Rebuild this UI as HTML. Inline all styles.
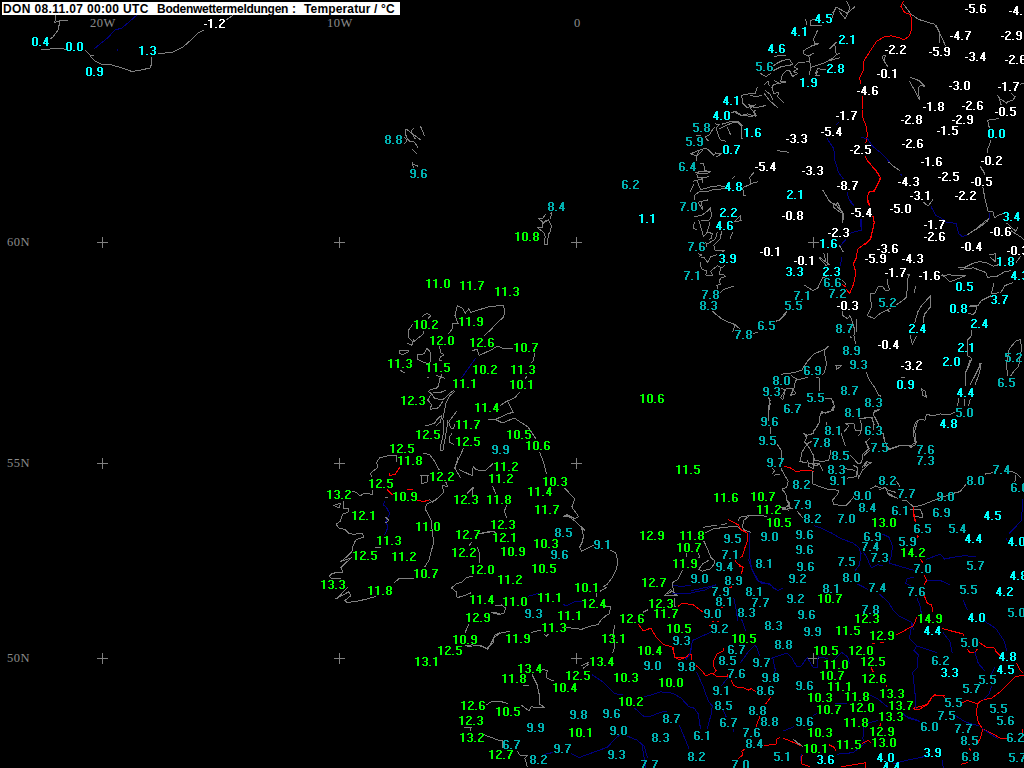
<!DOCTYPE html>
<html><head><meta charset="utf-8"><style>
html,body{margin:0;padding:0;background:#000;width:1024px;height:768px;overflow:hidden}
#m{position:relative;width:1024px;height:768px;background:#000;overflow:hidden}
svg{position:absolute;left:0;top:0}
.g{position:absolute;font:12.5px/12px "Liberation Serif",serif;color:#8c8c8c;letter-spacing:0.5px}
#hd{position:absolute;left:2px;top:2px;width:398px;height:13px;background:#fff;color:#000;font:bold 12px/13px "Liberation Sans",sans-serif;white-space:pre}
#hd span{position:absolute;top:1px;margin-left:-2px}
</style></head><body><div id="m">
<svg width="1024" height="768" fill="none" stroke-width="1" stroke-linejoin="round" stroke-linecap="square" shape-rendering="crispEdges">
<path d="M97 242h11v1h-11zM102 237h1v11h-1z" fill="#808080" stroke="none"/>
<path d="M97 463h11v1h-11zM102 458h1v11h-1z" fill="#808080" stroke="none"/>
<path d="M97 658h11v1h-11zM102 653h1v11h-1z" fill="#808080" stroke="none"/>
<path d="M334 242h11v1h-11zM339 237h1v11h-1z" fill="#808080" stroke="none"/>
<path d="M334 463h11v1h-11zM339 458h1v11h-1z" fill="#808080" stroke="none"/>
<path d="M334 658h11v1h-11zM339 653h1v11h-1z" fill="#808080" stroke="none"/>
<path d="M571 242h11v1h-11zM576 237h1v11h-1z" fill="#808080" stroke="none"/>
<path d="M571 463h11v1h-11zM576 458h1v11h-1z" fill="#808080" stroke="none"/>
<path d="M571 658h11v1h-11zM576 653h1v11h-1z" fill="#808080" stroke="none"/>
<path d="M808 242h11v1h-11zM813 237h1v11h-1z" fill="#808080" stroke="none"/>
<path d="M808 463h11v1h-11zM813 458h1v11h-1z" fill="#808080" stroke="none"/>
<path d="M808 658h11v1h-11zM813 653h1v11h-1z" fill="#808080" stroke="none"/>
<polyline points="55.0,15.0 56.0,19.0 54.0,23.0 61.0,20.0 68.0,21.0" stroke="#808080"/>
<polyline points="60.0,21.0 58.0,30.0 53.0,37.0 50.0,39.0" stroke="#808080"/>
<polyline points="41.0,49.0 49.0,49.0" stroke="#808080"/>
<polyline points="50.0,48.0 62.0,48.0 66.0,50.0" stroke="#808080"/>
<polyline points="85.0,50.0 90.0,55.0 94.0,55.0 90.0,56.0 95.0,61.0 101.0,64.0 112.0,65.0 122.0,68.0 132.0,71.5 141.0,70.0 150.0,68.0 152.0,63.0 151.0,57.0" stroke="#808080"/>
<polyline points="158.0,54.0 173.0,52.0 183.0,47.0 192.0,39.0 198.0,33.0 204.0,30.0" stroke="#808080"/>
<polyline points="226.0,20.0 232.0,16.0 232.0,15.0" stroke="#808080"/>
<polyline points="137.0,15.0 122.0,28.0 115.0,30.0 108.0,37.5 94.0,49.0" stroke="#000080"/>
<polyline points="117.0,49.0 118.0,51.0" stroke="#000080"/>
<polyline points="406.2,129.1 420.6,139.7" stroke="#808080"/>
<polyline points="406.0,129.0 405.0,132.7 407.3,138.9 409.7,141.2 414.4,142.0 417.9,147.5" stroke="#808080"/>
<polyline points="413.6,128.4 411.2,131.1 413.6,136.6 415.2,138.9" stroke="#808080"/>
<polyline points="420.6,126.4 424.5,135.8" stroke="#808080"/>
<polyline points="412.0,149.0 416.7,153.4" stroke="#808080"/>
<polyline points="412.0,162.3 413.6,167.8" stroke="#808080"/>
<polyline points="412.8,163.9 417.9,166.2" stroke="#808080"/>
<polyline points="404.2,137.3 406.6,139.7 405.8,142.8 404.6,143.2" stroke="#808080"/>
<polyline points="545.7,214.2 543.0,218.0 538.3,218.5 542.6,222.0 542.6,223.6 548.4,219.7 551.6,226.0 550.0,232.2 548.4,234.5 547.7,240.0 547.7,244.7 544.1,244.7 544.1,240.4 545.3,236.9 544.5,233.4 542.2,231.4 537.5,227.5 542.6,227.5 543.0,223.6 545.3,220.5" stroke="#808080"/>
<polyline points="550.8,213.4 551.6,213.0 550.6,218.9" stroke="#808080"/>
<polyline points="448.8,333.6 452.7,328.1 452.7,323.4 458.1,323.4 455.0,315.6 457.3,305.5 462.8,308.6 465.2,313.3 469.0,308.6 470.6,312.5 475.3,311.0 487.8,307.0 500.3,305.5 503.4,305.5 505.0,311.7 503.4,317.2 496.4,323.4 490.9,329.7 484.7,335.2" stroke="#808080"/>
<polyline points="472.2,350.8 476.9,349.2 479.2,355.5 492.5,349.2 497.2,346.1 503.4,348.4 512.8,348.4" stroke="#808080"/>
<polyline points="534.7,353.9 533.1,360.9 531.6,362.5" stroke="#808080"/>
<polyline points="526.9,376.6 525.3,378.1" stroke="#808080"/>
<polyline points="519.1,392.7 515.2,397.6 506.4,401.5 500.5,405.4" stroke="#808080"/>
<polyline points="508.4,402.5 513.2,412.2 506.4,414.2 496.6,419.0 488.8,419.0" stroke="#808080"/>
<polyline points="496.6,420.0 502.5,423.0 514.2,418.0 527.9,426.9 535.7,438.6" stroke="#808080"/>
<polyline points="539.6,452.3 543.5,462.0 546.4,473.8" stroke="#808080"/>
<polyline points="565.0,488.4 574.8,499.1 571.8,507.0 578.7,516.7 574.8,518.7 567.0,514.8 563.0,516.7 568.0,516.0 575.0,521.0 584.5,530.0" stroke="#808080"/>
<polyline points="422.2,316.4 426.9,313.3 430.8,315.6 428.4,318.0" stroke="#808080"/>
<polyline points="412.8,324.2 408.9,329.7 408.1,336.7 412.8,342.2 419.0,337.5 423.0,334.4 423.8,331.2" stroke="#808080"/>
<polyline points="407.3,343.0 412.0,345.3 413.6,339.8" stroke="#808080"/>
<polyline points="399.5,350.0 407.3,350.0 408.9,351.6 402.7,354.7 399.5,353.1 399.5,350.0" stroke="#808080"/>
<polyline points="417.5,354.7 423.8,353.9 426.9,348.4 430.0,351.6 430.8,360.2 429.2,364.0 423.8,362.5 417.5,359.4 417.5,354.7" stroke="#808080"/>
<polyline points="439.4,346.9 440.9,353.1 444.0,354.7 440.2,357.0 439.4,360.2 441.7,360.9" stroke="#808080"/>
<polyline points="400.3,370.3 404.2,372.6" stroke="#808080"/>
<polyline points="436.2,375.0 440.2,377.3 444.8,378.1" stroke="#808080"/>
<polyline points="426.9,378.1 428.4,377.3" stroke="#808080"/>
<polyline points="441.7,375.0 439.4,379.7 438.6,385.9 436.2,388.3 430.0,389.8 428.4,391.4 431.6,393.8 427.7,400.0 431.6,404.7 430.0,409.4 438.6,407.8 442.5,401.6" stroke="#808080"/>
<polyline points="433.1,392.2 440.9,392.2 445.6,390.6" stroke="#808080"/>
<polyline points="431.6,393.8 434.7,398.4 442.5,400.0 450.3,393.0 453.4,390.6" stroke="#808080"/>
<polyline points="475.3,358.6 462.0,377.3" stroke="#000080"/>
<polyline points="454.6,391.7 449.8,395.6 445.9,403.4 442.9,419.0 443.9,430.8 441.0,444.5 440.0,450.3 443.0,450.0 446.1,432.8 448.0,420.0" stroke="#808080"/>
<polyline points="456.6,411.2 448.8,422.0 450.7,427.9 453.7,428.8 454.6,424.9" stroke="#808080"/>
<polyline points="451.7,433.7 449.8,436.6 449.8,442.5 453.7,444.5" stroke="#808080"/>
<polyline points="425.8,425.8 434.4,423.4 437.5,418.8 441.4,415.6 440.6,421.9 436.0,425.8" stroke="#808080"/>
<polyline points="463.4,448.4 454.6,467.9 460.5,477.7" stroke="#808080"/>
<polyline points="459.5,469.8 472.2,475.7 473.2,465.9 476.1,469.8 484.9,470.8 492.7,464.0" stroke="#808080"/>
<polyline points="492.7,486.4 495.7,493.3" stroke="#808080"/>
<polyline points="506.4,506.0 504.5,510.9 506.4,517.7" stroke="#808080"/>
<polyline points="467.3,493.3 473.2,487.4 472.2,495.2" stroke="#808080"/>
<polyline points="454.7,468.8 457.8,457.8" stroke="#808080"/>
<polyline points="371.9,476.6 370.3,473.4 378.1,467.2 376.6,462.5 379.7,457.8 389.0,455.5 396.1,455.5 396.9,461.7" stroke="#808080"/>
<polyline points="400.0,467.2 395.3,474.2 389.0,475.8 389.8,473.4" stroke="#ff0000"/>
<polyline points="387.5,489.8 392.2,494.5" stroke="#ff0000"/>
<polyline points="407.0,489.4 412.5,489.4" stroke="#ff0000"/>
<polyline points="417.2,500.0 423.4,501.6 428.9,500.0" stroke="#ff0000"/>
<polyline points="429.7,500.0 432.8,502.3 439.0,496.9 443.8,492.2 442.2,485.2 447.7,486.7 446.1,482.8" stroke="#808080"/>
<polyline points="423.4,453.1 429.7,454.7 434.4,460.9 439.0,469.5" stroke="#808080"/>
<polyline points="421.0,475.8 428.1,475.0 427.3,482.0 421.9,483.6 421.0,475.8" stroke="#808080"/>
<polyline points="352.3,491.4 356.2,492.2 360.2,496.1 364.0,493.0 372.7,494.5 372.7,490.3" stroke="#808080"/>
<polyline points="333.6,505.5 340.6,503.1 339.0,507.8 333.6,505.5" stroke="#808080"/>
<polyline points="385.0,497.7 387.0,497.7" stroke="#808080"/>
<polyline points="343.0,501.0 344.0,508.8 348.8,508.8 347.9,512.7 343.0,513.7 340.0,521.5 336.1,524.4 339.0,528.3 344.9,529.3 348.8,533.2 352.7,534.2 362.5,533.6 363.5,537.1 355.7,540.0 352.7,546.9 351.8,551.8 346.9,556.6 341.0,561.5 351.8,557.6 345.9,562.5 341.0,567.4 343.0,572.3 332.2,573.2 329.3,576.2 331.2,578.1 340.0,578.1" stroke="#808080"/>
<polyline points="347.9,586.9 337.1,598.6" stroke="#808080"/>
<polyline points="336.1,598.6 348.8,591.8 350.8,595.7 344.9,600.6 346.9,602.5 354.7,601.6 364.5,599.6 375.2,596.7" stroke="#808080"/>
<polyline points="393.8,583.0 399.6,578.1 413.3,578.1" stroke="#808080"/>
<polyline points="434.8,500.0 427.0,503.9 425.0,508.8 428.9,515.6 430.9,519.5 432.8,535.2 433.8,542.0 430.9,552.7 428.9,560.5 425.0,566.4" stroke="#808080"/>
<polyline points="375.2,547.3 380.1,547.3" stroke="#808080"/>
<polyline points="385.0,501.0 383.0,505.0 386.0,506.8 389.8,513.7 386.0,521.5 387.9,527.3 385.0,534.2" stroke="#000080"/>
<polyline points="386.0,517.6 388.9,520.5 386.0,522.5" stroke="#808080"/>
<polyline points="481.6,533.2 491.4,531.2 495.3,532.2" stroke="#808080"/>
<polyline points="471.9,542.0 469.0,545.9" stroke="#808080"/>
<polyline points="477.7,547.9 479.7,554.7 479.7,562.5" stroke="#808080"/>
<polyline points="471.9,576.2 466.0,578.1 462.1,582.0 456.2,584.0 451.4,587.9 456.2,591.8 457.2,597.7 464.0,595.7 470.9,592.8" stroke="#808080"/>
<polyline points="495.0,606.0 501.5,605.0 505.4,607.9 504.4,612.8 499.5,614.7 491.7,612.8" stroke="#808080"/>
<polyline points="491.4,612.3 500.0,613.3" stroke="#808080"/>
<polyline points="468.9,624.0 465.0,632.8" stroke="#808080"/>
<polyline points="466.0,645.5 471.9,644.9 479.7,645.5 487.5,649.4 492.4,640.6 495.3,634.8 500.0,632.8" stroke="#808080"/>
<polyline points="509.3,631.3 499.5,633.3 494.6,637.2 490.7,645.0 487.8,648.9 480.0,645.0" stroke="#808080"/>
<polyline points="540.5,630.3 531.8,632.3" stroke="#808080"/>
<polyline points="544.5,634.3 546.4,636.2 548.4,634.3" stroke="#808080"/>
<polyline points="573.8,520.0 581.6,527.8 583.5,535.6 582.5,541.5 579.6,547.3 581.6,551.2 585.5,549.3 593.3,545.4" stroke="#808080"/>
<polyline points="610.9,550.3 615.8,553.2 617.7,561.0 616.7,568.8 612.8,576.6 607.0,584.5 603.0,586.4 607.0,587.4 600.1,591.3" stroke="#808080"/>
<polyline points="596.2,593.2 596.2,596.2" stroke="#808080"/>
<polyline points="605.0,606.0 610.9,607.0 609.0,613.8 606.0,615.7 601.1,619.6 598.2,624.5 589.4,626.4 581.6,629.4 566.9,627.4" stroke="#808080"/>
<polyline points="480.0,533.7 491.7,531.7" stroke="#808080"/>
<polyline points="528.8,596.2 538.6,593.2" stroke="#000080"/>
<polyline points="563.0,604.0 565.9,606.0 573.8,602.0 581.6,601.0" stroke="#000080"/>
<polyline points="614.8,625.5 612.8,635.2 614.8,647.0 612.8,652.8" stroke="#808080"/>
<polyline points="581.6,665.5 588.4,662.6" stroke="#808080"/>
<polyline points="644.0,611.8 648.0,609.8" stroke="#808080"/>
<polyline points="738.4,520.3 740.0,517.2 749.4,515.6 761.9,515.6 766.6,516.4" stroke="#808080"/>
<polyline points="749.4,515.6 743.9,520.3 742.3,526.6 744.7,530.5 750.2,532.0" stroke="#808080"/>
<polyline points="703.3,527.3 711.9,525.8 716.6,525.0" stroke="#808080"/>
<polyline points="721.2,525.0 726.7,523.4" stroke="#808080"/>
<polyline points="705.6,532.8 713.4,528.9 724.4,527.3 736.9,526.2 746.2,532.8" stroke="#808080"/>
<polyline points="704.0,541.4 707.2,548.4 711.1,557.8 714.2,560.2 714.2,564.0 710.3,568.8 702.5,571.1 698.6,569.5 702.5,564.0 708.8,560.2" stroke="#808080"/>
<polyline points="686.0,553.9 686.0,556.2" stroke="#808080"/>
<polyline points="698.6,553.9 700.2,557.0 698.6,557.8" stroke="#808080"/>
<polyline points="682.2,570.3 677.5,579.7 672.0,582.8 672.8,586.7 673.6,590.6" stroke="#808080"/>
<polyline points="664.4,595.4 670.4,589.4 678.1,595.9 664.4,595.4" stroke="#808080"/>
<polyline points="667.8,593.7 672.0,591.1 675.5,594.9" stroke="#808080"/>
<polyline points="674.4,598.0 674.4,606.2 676.0,607.0" stroke="#808080"/>
<polyline points="647.8,610.2 643.1,612.5" stroke="#808080"/>
<polyline points="728.3,519.5 738.4,525.0 740.8,529.7 747.0,532.8 747.8,539.8 744.7,548.4 742.3,556.2 740.0,557.8" stroke="#ff0000"/>
<polyline points="735.3,561.0 737.7,564.0 743.1,567.2 741.6,573.4" stroke="#ff0000"/>
<polyline points="730.0,587.5 731.5,587.0" stroke="#ff0000"/>
<polyline points="722.0,607.5 723.0,607.0" stroke="#ff0000"/>
<polyline points="678.3,606.2 682.2,603.1 693.1,604.7 702.5,611.7" stroke="#ff0000"/>
<polyline points="749.4,532.8 749.4,546.9 750.2,562.5 752.5,570.3 758.8,581.2 769.7,584.4 777.5,590.6 782.2,588.3" stroke="#000080"/>
<polyline points="673.6,585.2 681.4,586.7 690.0,585.2" stroke="#000080"/>
<polyline points="672.8,593.8 686.9,593.8 705.6,589.8 710.3,587.5 715.8,584.4" stroke="#000080"/>
<polyline points="691.6,590.6 705.6,587.5 715.0,585.2" stroke="#000080"/>
<polyline points="733.8,598.4 736.1,609.4 737.7,620.0" stroke="#000080"/>
<polyline points="786.9,500.0 790.0,503.9 786.9,506.2 792.3,508.6 782.2,509.4" stroke="#808080"/>
<polyline points="836.2,7.0 833.9,11.7 832.3,17.2" stroke="#808080"/>
<polyline points="836.2,7.0 840.0,9.5" stroke="#808080"/>
<polyline points="805.8,19.5 806.6,24.2" stroke="#808080"/>
<polyline points="815.2,19.5 810.5,20.3 810.5,25.8 821.4,25.8" stroke="#808080"/>
<polyline points="817.5,30.5 813.6,39.0 814.4,43.0 818.3,43.8 811.2,46.1 803.4,50.8 804.2,54.7 808.9,55.5 813.6,53.1 808.9,56.2 810.5,65.6 809.7,75.0" stroke="#808080"/>
<polyline points="811.2,67.2 825.3,62.5 833.1,57.8 836.2,54.7 840.0,53.1" stroke="#808080"/>
<polyline points="836.2,42.2 831.6,46.9 830.0,48.4" stroke="#808080"/>
<polyline points="834.7,43.8 836.2,54.7" stroke="#808080"/>
<polyline points="830.8,60.2 840.0,57.8" stroke="#808080"/>
<polyline points="826.0,69.5 817.5,68.8 815.2,73.4 817.5,71.9 815.9,75.8 819.8,75.0" stroke="#808080"/>
<polyline points="809.7,61.7 798.8,62.5 794.0,67.2 798.0,68.8 793.3,71.9 798.0,73.4 792.5,76.6 789.4,70.3 785.5,71.1 782.3,75.0 780.8,81.2 785.5,82.0 773.8,84.4 771.4,87.5" stroke="#808080"/>
<polyline points="774.5,56.2 785.5,55.5" stroke="#808080"/>
<polyline points="773.8,65.6 776.9,63.3 783.1,60.2 789.4,59.4 792.5,64.0 789.4,65.6 781.6,66.4 773.8,70.3" stroke="#808080"/>
<polyline points="760.5,73.4 765.9,76.6 770.6,73.4" stroke="#808080"/>
<polyline points="764.4,84.4 768.3,81.2 769.0,85.2" stroke="#808080"/>
<polyline points="774.5,80.5 778.4,82.8 773.8,85.2" stroke="#808080"/>
<polyline points="757.3,87.5 755.0,93.8 748.8,93.8 741.7,95.3 742.5,103.1 747.2,107.8 755.8,104.7 750.3,107.8 756.6,115.6 750.3,116.4 739.4,114.8 733.1,110.9" stroke="#808080"/>
<polyline points="765.2,90.6 769.8,93.8 773.0,100.0" stroke="#808080"/>
<polyline points="764.4,93.8 769.0,100.0 777.7,107.8" stroke="#808080"/>
<polyline points="772.2,87.5 773.8,93.8 778.4,92.2 777.7,96.9 783.1,102.3" stroke="#808080"/>
<polyline points="750.3,95.3 756.6,96.9 761.2,95.3" stroke="#808080"/>
<polyline points="748.8,104.7 755.0,107.8 765.9,105.5" stroke="#808080"/>
<polyline points="731.9,112.3 736.6,111.6 741.2,115.5 747.5,113.9 755.3,116.2 753.8,112.3 755.3,110.0" stroke="#808080"/>
<polyline points="715.5,124.0 719.4,124.8 716.2,128.0 717.8,133.4 720.2,139.7 725.6,141.2" stroke="#808080"/>
<polyline points="719.4,128.8 725.6,125.6 733.4,122.5 738.1,122.5 742.0,127.2 741.2,138.1 742.8,138.9" stroke="#808080"/>
<polyline points="722.5,124.0 732.7,121.0 738.1,121.7 742.0,125.6" stroke="#808080"/>
<polyline points="727.2,127.2 730.3,134.2" stroke="#808080"/>
<polyline points="714.7,127.2 711.6,131.1 709.2,135.0 705.3,136.6 706.9,139.7 708.4,140.5" stroke="#808080"/>
<polyline points="696.0,135.0 700.6,135.0" stroke="#808080"/>
<polyline points="705.3,148.3 708.4,149.8 713.9,155.3 715.5,153.0 721.7,153.8 716.2,156.9" stroke="#808080"/>
<polyline points="704.5,148.3 698.3,150.6 690.5,153.8 696.7,156.1 702.2,150.6" stroke="#808080"/>
<polyline points="699.0,150.6 696.0,156.9 696.7,160.0" stroke="#808080"/>
<polyline points="700.6,163.1 703.8,163.9 704.5,170.2 708.4,171.7" stroke="#808080"/>
<polyline points="696.0,172.5 703.8,171.0 710.8,171.7 706.9,173.3 696.7,174.0 697.5,177.2 703.8,178.0 708.4,176.4" stroke="#808080"/>
<polyline points="693.6,181.1 697.5,180.3 702.2,178.8 702.2,182.7" stroke="#808080"/>
<polyline points="693.6,185.0 690.5,191.2" stroke="#808080"/>
<polyline points="697.5,181.9 700.6,189.7 706.9,188.1 711.6,186.6 719.4,185.8 724.1,186.6" stroke="#808080"/>
<polyline points="695.2,194.4 700.6,191.2 705.3,192.0 713.1,189.7 722.5,188.9 724.8,188.9" stroke="#808080"/>
<polyline points="694.4,195.2 694.4,199.0" stroke="#808080"/>
<polyline points="732.7,178.8 734.2,176.4" stroke="#808080"/>
<polyline points="743.6,187.3 753.8,182.7 757.6,181.9" stroke="#808080"/>
<polyline points="753.8,172.5 749.8,177.2 750.6,183.4 749.0,185.0" stroke="#808080"/>
<polyline points="742.8,188.1 743.6,195.9 745.2,195.2" stroke="#808080"/>
<polyline points="777.2,150.6 788.1,152.2" stroke="#808080"/>
<polyline points="698.1,202.3 707.5,200.0" stroke="#808080"/>
<polyline points="698.1,203.1 702.8,209.4 701.2,203.1" stroke="#808080"/>
<polyline points="694.2,216.4 701.2,215.6 706.7,211.7 710.6,207.8 711.4,216.4 709.0,220.3 701.2,220.3" stroke="#808080"/>
<polyline points="694.2,222.7 693.4,228.1 696.6,229.7" stroke="#808080"/>
<polyline points="698.9,220.3 703.6,236.7 707.5,232.0 712.2,233.6 711.4,238.3 709.0,239.8" stroke="#808080"/>
<polyline points="709.8,222.7 707.5,231.2" stroke="#808080"/>
<polyline points="717.2,232.8 715.3,239.0 707.5,243.8" stroke="#808080"/>
<polyline points="721.6,232.0 720.0,239.0 713.8,245.3 715.3,250.8 724.7,250.0 723.1,251.6" stroke="#808080"/>
<polyline points="705.9,242.2 706.7,246.9" stroke="#808080"/>
<polyline points="732.5,232.8 730.2,238.3" stroke="#808080"/>
<polyline points="734.0,221.9 740.3,215.6 741.1,220.3 735.6,221.9" stroke="#808080"/>
<polyline points="698.9,253.9 702.0,254.7 699.7,256.2" stroke="#808080"/>
<polyline points="701.2,257.8 704.4,257.8 707.5,262.5 710.6,257.0 716.9,254.7" stroke="#808080"/>
<polyline points="700.5,262.5 701.2,268.8 706.7,271.1 705.9,275.0 713.0,275.8 710.6,271.1 714.5,268.0 717.7,265.6 721.6,268.0 724.7,265.6" stroke="#808080"/>
<polyline points="720.8,267.2 719.2,275.0 723.1,274.2 725.5,276.6 720.8,278.1 719.2,281.2 720.8,284.4 716.9,285.2 717.7,288.3" stroke="#808080"/>
<polyline points="720.0,293.0 723.1,289.8 734.0,285.9" stroke="#808080"/>
<polyline points="713.0,311.7 723.1,320.0" stroke="#808080"/>
<polyline points="804.4,285.2 813.0,290.6 817.7,288.3 822.3,278.1 826.2,276.6" stroke="#808080"/>
<polyline points="786.4,311.7 779.4,320.0" stroke="#808080"/>
<polyline points="819.2,257.8 826.2,265.6" stroke="#808080"/>
<polyline points="823.9,253.9 826.2,262.5" stroke="#808080"/>
<polyline points="827.8,253.0 827.8,264.0" stroke="#808080"/>
<polyline points="713.3,312.5 721.9,318.8 729.7,322.7 733.6,323.4 734.4,327.3 732.8,331.2" stroke="#808080"/>
<polyline points="733.6,323.4 739.8,328.9" stroke="#808080"/>
<polyline points="753.1,333.6 757.8,332.0" stroke="#808080"/>
<polyline points="776.6,321.0 781.2,318.8 786.7,312.5" stroke="#808080"/>
<polyline points="842.2,311.7 843.0,315.6 847.7,318.8 850.0,315.6 852.3,321.9 854.7,329.7 853.9,335.9 855.5,343.8" stroke="#808080"/>
<polyline points="856.0,319.5 856.0,331.0" stroke="#808080"/>
<polyline points="850.0,336.7 851.5,337.5" stroke="#808080"/>
<polyline points="836.0,365.6 841.4,365.6 836.7,369.5 836.0,365.6" stroke="#808080"/>
<polyline points="828.9,346.1 823.4,350.0 814.0,353.9 807.8,360.9 804.7,365.6 801.6,370.3 793.8,372.7 781.2,374.2" stroke="#808080"/>
<polyline points="828.9,346.1 825.0,350.0 824.2,351.6 826.6,364.0 824.2,372.7 821.9,375.0" stroke="#808080"/>
<polyline points="791.4,375.8 797.7,379.7 807.8,377.3" stroke="#808080"/>
<polyline points="797.7,379.7 795.3,381.2 793.8,389.0 790.6,395.3 796.1,393.8 792.2,388.3" stroke="#808080"/>
<polyline points="816.4,377.3 819.5,378.1 819.5,390.6" stroke="#808080"/>
<polyline points="781.2,388.3 785.2,389.8 782.8,400.0 780.5,397.7 786.0,389.0 792.2,388.3" stroke="#808080"/>
<polyline points="768.8,397.7 770.3,403.9 768.0,414.0 768.8,420.0" stroke="#808080"/>
<polyline points="825.0,398.4 831.2,398.4 834.4,405.5 833.6,410.2 825.0,412.5 820.3,414.0 819.5,420.0" stroke="#808080"/>
<polyline points="770.2,400.0 768.6,406.2 768.6,414.0" stroke="#808080"/>
<polyline points="770.2,427.3 770.2,433.6" stroke="#808080"/>
<polyline points="777.2,444.5 781.1,450.0 781.9,459.4" stroke="#808080"/>
<polyline points="781.1,468.8 788.1,481.2 786.6,487.5 781.9,489.0 785.8,493.8 786.6,500.0 789.7,506.2 781.9,507.8 788.9,510.2" stroke="#808080"/>
<polyline points="772.5,468.8 774.8,470.3 772.5,473.4" stroke="#808080"/>
<polyline points="774.8,475.0 779.5,474.2" stroke="#808080"/>
<polyline points="797.5,511.7 802.2,517.2" stroke="#808080"/>
<polyline points="832.7,400.0 834.2,405.5 831.1,411.0 825.6,413.3 821.7,411.7 820.2,414.0 819.4,421.9 816.2,428.1 813.9,430.5 813.1,433.6 806.9,435.2 803.0,432.8 806.9,437.5 804.5,442.2 806.9,444.5 802.2,451.6 799.8,461.7 806.9,462.5" stroke="#808080"/>
<polyline points="806.9,443.8 811.6,441.4" stroke="#808080"/>
<polyline points="806.9,443.8 813.1,454.7 814.7,460.2 822.5,461.7 828.8,460.2 831.1,450.0" stroke="#808080"/>
<polyline points="826.4,422.7 826.4,424.0" stroke="#808080"/>
<polyline points="807.8,460.2 808.4,466.4 813.9,468.8 813.9,459.4" stroke="#808080"/>
<polyline points="810.0,463.3 816.2,465.6 819.4,464.0 822.5,470.3" stroke="#808080"/>
<polyline points="785.0,466.4 790.5,468.0 796.7,471.9 802.2,470.3 813.1,471.1" stroke="#ff0000"/>
<polyline points="812.3,471.9 812.3,483.6 816.2,485.2 828.8,489.8 835.0,489.8 838.9,490.6 837.3,494.5 832.7,500.0 833.4,504.7 845.9,505.5 849.8,501.6 853.8,496.9" stroke="#808080"/>
<polyline points="841.2,433.6 845.2,445.3" stroke="#808080"/>
<polyline points="844.4,431.2 849.1,425.8 845.2,423.4 853.8,423.4 855.3,430.5 860.0,430.5 860.8,433.6 858.4,435.2" stroke="#808080"/>
<polyline points="860.0,418.8 872.5,417.2 874.0,429.7" stroke="#808080"/>
<polyline points="874.0,412.5 879.5,409.4" stroke="#808080"/>
<polyline points="873.3,414.8 878.8,425.0" stroke="#808080"/>
<polyline points="860.8,420.3 861.6,430.5" stroke="#808080"/>
<polyline points="883.4,433.6 885.0,442.2 889.0,449.2 900.6,445.3 910.0,446.1 916.2,442.2 914.7,431.2 917.8,420.3" stroke="#808080"/>
<polyline points="869.4,438.3 866.2,442.2 869.4,448.4 863.1,453.9 861.6,462.5 858.4,464.0 850.6,455.5" stroke="#808080"/>
<polyline points="853.8,465.6 856.9,467.2 858.4,478.1 862.3,470.3 871.0,462.5 866.2,461.7 862.3,467.2" stroke="#808080"/>
<polyline points="845.9,468.8 854.5,470.3" stroke="#808080"/>
<polyline points="847.5,478.1 856.1,476.6 857.7,467.2" stroke="#808080"/>
<polyline points="870.2,489.0 875.6,486.0 881.9,488.3 885.0,487.5 888.1,493.0 897.5,498.4" stroke="#808080"/>
<polyline points="896.7,481.2 899.8,486.7" stroke="#808080"/>
<polyline points="867.1,160.0 873.4,167.8 880.4,177.2 878.1,183.4 874.2,191.2 869.5,192.0 867.1,196.7 869.5,205.3" stroke="#ff0000"/>
<polyline points="873.4,217.0 874.2,222.5 871.8,233.4 870.2,239.7 864.0,245.2" stroke="#ff0000"/>
<polyline points="889.0,162.3 893.0,166.0 899.2,170.2" stroke="#808080"/>
<polyline points="887.4,160.0 889.0,161.6" stroke="#000080"/>
<polyline points="900.7,174.0 901.5,175.6" stroke="#000080"/>
<polyline points="923.4,202.2 928.1,206.1 932.8,199.8" stroke="#808080"/>
<polyline points="931.2,206.9 935.9,215.5 940.6,217.8 946.8,222.5 956.2,223.3 958.5,233.4 962.4,236.6 967.1,235.0" stroke="#000080"/>
<polyline points="967.1,235.0 976.5,228.8 984.3,221.7 989.0,218.6 987.4,221.0 979.6,227.2 975.0,230.0" stroke="#808080"/>
<polyline points="989.0,213.1 989.8,218.6" stroke="#000080"/>
<polyline points="980.4,166.2 984.3,172.5 984.3,174.8" stroke="#808080"/>
<polyline points="982.8,187.3 985.1,199.0 988.2,211.6 992.9,211.6 994.5,217.8 999.2,214.7 1002.3,213.9" stroke="#808080"/>
<polyline points="1007.0,223.3 1015.6,231.1 1018.0,227.2" stroke="#808080"/>
<polyline points="1011.7,231.1 1020.2,236.6 1024.0,239.7" stroke="#808080"/>
<polyline points="1020.2,256.9 1016.3,262.3" stroke="#808080"/>
<polyline points="958.5,267.8 964.0,267.8 973.4,263.1 979.6,261.6 987.4,263.1 993.8,266.2 998.4,264.7" stroke="#808080"/>
<polyline points="960.9,269.4 973.4,267.8 985.9,272.5 987.4,277.2 996.8,276.4 1004.6,271.7 1010.1,270.9" stroke="#808080"/>
<polyline points="989.8,254.5 995.2,253.8 995.2,261.6 990.6,257.6" stroke="#808080"/>
<polyline points="941.3,275.6 948.4,274.8 957.8,275.6 965.6,275.6" stroke="#808080"/>
<polyline points="907.8,274.8 909.3,274.8 907.8,278.8 907.0,291.2 906.2,297.5 901.5,301.4 896.8,304.5" stroke="#808080"/>
<polyline points="887.4,279.5 887.4,283.4 889.8,289.7 885.9,291.2 882.8,286.6 878.1,286.6 874.9,293.6 871.0,293.6 870.2,297.5 871.8,306.9 867.1,315.5 874.2,318.6 879.6,313.9 886.7,310.0 890.6,308.4" stroke="#808080"/>
<polyline points="887.4,310.0 889.0,311.6" stroke="#808080"/>
<polyline points="915.6,286.6 914.0,292.8" stroke="#808080"/>
<polyline points="930.4,296.0 921.8,305.3 917.9,311.6 914.8,322.5" stroke="#808080"/>
<polyline points="930.4,296.0 930.4,306.9 924.2,314.7 923.4,322.5" stroke="#808080"/>
<polyline points="910.1,335.8 912.4,344.4 916.3,336.6" stroke="#808080"/>
<polyline points="942.1,274.8 945.2,277.2 950.0,281.9 957.8,278.8 965.6,275.6" stroke="#808080"/>
<polyline points="1012.4,282.7 1004.6,285.8 1000.7,292.8" stroke="#808080"/>
<polyline points="993.8,283.4 991.4,293.6 998.4,292.8" stroke="#808080"/>
<polyline points="990.6,295.9 981.2,300.6 978.1,305.3 968.8,306.1 976.5,306.9 975.7,311.6 972.6,314.7 968.8,313.1" stroke="#808080"/>
<polyline points="971.8,330.3 971.0,336.6 967.9,339.7 967.1,355.3 971.8,358.4 968.8,366.2 965.6,372.5 965.6,385.0" stroke="#808080"/>
<polyline points="970.2,360.0 965.6,372.5" stroke="#808080"/>
<polyline points="981.2,363.1 970.2,385.0" stroke="#808080"/>
<polyline points="979.6,363.9 981.2,363.1 979.6,372.5 975.0,385.0" stroke="#808080"/>
<polyline points="1020.2,339.7 1015.6,341.2 1009.3,349.0 1006.2,364.7 1007.8,375.6" stroke="#808080"/>
<polyline points="1020.2,339.7 1021.8,347.5 1018.7,366.2 1014.0,371.0 1010.9,375.6" stroke="#808080"/>
<polyline points="901.5,377.2 904.6,377.2" stroke="#808080"/>
<polyline points="866.3,372.5 868.7,378.8 875.0,388.1 878.8,395.2 880.4,396.0" stroke="#808080"/>
<polyline points="879.6,409.2 874.9,410.8 873.4,414.7 876.5,420.2 878.8,424.0" stroke="#808080"/>
<polyline points="864.0,417.8 871.8,417.8 873.4,422.5 874.2,424.8" stroke="#808080"/>
<polyline points="882.8,433.4 884.3,439.7" stroke="#808080"/>
<polyline points="870.2,438.1 865.6,442.0 867.9,447.5 869.5,450.6 864.0,455.3" stroke="#808080"/>
<polyline points="864.0,466.2 871.0,463.1 867.1,461.6 865.6,464.7" stroke="#808080"/>
<polyline points="889.0,449.8 901.5,445.2 909.3,445.6 910.9,447.5 915.6,444.4 914.0,436.6 913.2,428.8 915.6,422.5 920.2,419.4 924.9,420.2 926.5,414.7 934.3,415.5 940.6,413.9 945.2,414.7 951.5,413.9 954.6,412.3" stroke="#808080"/>
<polyline points="957.8,405.3 958.5,399.0" stroke="#808080"/>
<polyline points="964.0,405.3 964.0,399.0" stroke="#808080"/>
<polyline points="968.8,405.3 970.2,399.0" stroke="#808080"/>
<polyline points="921.8,388.9 925.0,391.2 926.5,397.5 922.6,395.2 921.8,388.9" stroke="#808080"/>
<polyline points="880.0,489.5 885.6,487.4 888.4,490.2 887.0,492.3 890.5,495.9 896.9,498.0" stroke="#808080"/>
<polyline points="888.4,490.2 895.5,492.3" stroke="#808080"/>
<polyline points="902.5,500.8 906.0,500.0 908.1,502.2 913.8,507.1" stroke="#808080"/>
<polyline points="913.8,507.1 922.2,505.0 936.2,499.4 954.5,493.0 960.2,491.6 965.8,484.6" stroke="#808080"/>
<polyline points="985.5,474.0 992.5,472.7" stroke="#808080"/>
<polyline points="1010.8,471.2 1016.4,473.4 1020.6,477.6" stroke="#808080"/>
<polyline points="1015.7,475.5 1015.0,481.1" stroke="#808080"/>
<polyline points="910.2,509.2 920.8,510.0 922.2,514.1 922.9,517.7 913.8,516.2" stroke="#808080"/>
<polyline points="913.0,507.1 913.8,516.2 915.9,521.9" stroke="#ff0000"/>
<polyline points="917.3,535.2 918.0,536.6" stroke="#ff0000"/>
<polyline points="920.8,559.9 922.2,562.7" stroke="#ff0000"/>
<polyline points="1022.0,499.4 1022.8,502.2 1021.3,520.5 1015.0,527.5 1009.4,533.1" stroke="#000080"/>
<polyline points="1006.6,538.8 1007.3,540.9" stroke="#000080"/>
<polyline points="926.4,559.2 940.5,554.2 944.7,559.2 950.3,557.8 964.4,555.6 975.6,557.0" stroke="#000080"/>
<polyline points="903.1,1.6 900.8,6.2 904.7,12.5 910.9,14.8 911.7,28.9 909.4,35.9 903.9,39.8 898.4,37.5 891.4,35.9 884.4,36.7 876.6,41.4 868.8,53.1 864.0,60.9 863.3,70.3 859.4,78.1 860.9,83.6" stroke="#ff0000"/>
<polyline points="862.5,96.9 862.0,110.0 862.8,117.8 865.9,125.6 867.5,135.0 865.9,142.8" stroke="#ff0000"/>
<polyline points="865.2,156.9 869.1,163.1 875.3,169.4 880.8,178.0 877.7,185.0 874.5,190.5 869.1,192.0 867.5,196.0 867.5,202.2 869.1,205.3" stroke="#ff0000"/>
<polyline points="903.9,4.7 910.9,14.0 918.8,19.5 934.4,24.2 939.0,31.2 939.8,42.2" stroke="#808080"/>
<polyline points="935.9,25.0 945.3,45.3" stroke="#808080"/>
<polyline points="882.0,56.2 885.2,55.5 884.4,61.0 887.5,66.4 883.6,60.2 882.0,56.2" stroke="#808080"/>
<polyline points="910.2,77.3 918.8,80.5 925.0,86.7 920.3,85.2 918.0,89.0 919.5,100.0 916.4,93.8 910.9,83.6 909.4,81.2" stroke="#808080"/>
<polyline points="846.9,1.6 850.0,7.8 845.3,18.8 839.0,10.9" stroke="#808080"/>
<polyline points="832.8,12.5 836.7,7.0 846.9,13.3 854.7,7.0" stroke="#808080"/>
<polyline points="838.6,122.5 836.2,124.8" stroke="#000080"/>
<polyline points="826.9,138.1 833.9,149.0 834.7,160.0 838.6,172.5 843.3,178.8" stroke="#000080"/>
<polyline points="847.2,192.8 849.5,200.6 853.4,205.3" stroke="#000080"/>
<polyline points="861.2,219.4 861.2,230.0" stroke="#000080"/>
<polyline points="862.0,137.3 867.5,138.9 872.2,145.9 880.0,152.2 887.8,160.0" stroke="#000080"/>
<polyline points="823.0,190.5 830.0,202.2 834.7,203.8 844.1,213.9 842.5,222.5" stroke="#808080"/>
<polyline points="834.7,203.8 833.0,206.9 841.0,213.0" stroke="#808080"/>
<polyline points="997.1,95.2 1000.2,99.0 1006.5,103.0 1008.0,101.4 1012.8,100.6 1015.1,96.7 1011.2,93.6" stroke="#808080"/>
<polyline points="999.5,99.0 1001.0,104.5" stroke="#808080"/>
<polyline points="1020.6,84.2 1023.0,83.4" stroke="#808080"/>
<polyline points="998.7,118.6 987.8,120.2 988.5,125.6 989.3,127.2" stroke="#808080"/>
<polyline points="990.9,140.5 987.8,149.0 987.8,152.2" stroke="#808080"/>
<polyline points="980.0,166.2 984.6,174.0" stroke="#808080"/>
<polyline points="748.6,560.0 752.5,571.0 757.2,580.3 761.9,583.4 769.7,583.4 773.6,588.1 777.5,590.5 783.0,588.1" stroke="#000080"/>
<polyline points="741.6,619.4 745.5,630.3" stroke="#000080"/>
<polyline points="740.0,663.1 744.7,656.9 747.8,652.2 754.8,645.2 756.4,646.7 759.5,655.3" stroke="#000080"/>
<polyline points="771.2,658.4 786.9,653.0 791.6,657.6 797.0,667.0 801.0,666.2 807.2,657.6 813.4,667.8 817.3,667.8 818.1,656.9 827.5,658.4" stroke="#000080"/>
<polyline points="772.8,658.4 775.2,669.4 773.6,680.0" stroke="#000080"/>
<polyline points="833.8,660.0 841.6,652.2 847.8,656.9 849.4,663.9" stroke="#000080"/>
<polyline points="740.0,566.2 743.1,567.0 741.6,573.3" stroke="#ff0000"/>
<polyline points="872.8,643.6 875.0,643.0" stroke="#ff0000"/>
<polyline points="881.0,642.5 883.8,642.0" stroke="#ff0000"/>
<polyline points="871.2,667.8 872.8,671.7" stroke="#ff0000"/>
<polyline points="638.5,624.5 643.5,631.0 651.0,628.0 656.0,637.0 663.5,644.5 672.0,647.0 675.0,657.0 683.5,658.0 691.0,654.5 691.0,659.5" stroke="#ff0000"/>
<polyline points="673.1,648.0 674.7,657.4 679.4,659.7 685.6,657.4 688.8,654.2 691.1,654.2 691.9,659.7" stroke="#ff0000"/>
<polyline points="723.9,648.0 723.1,651.1 716.9,654.2 713.8,660.5 713.0,665.2 716.1,670.7 713.0,673.8 717.7,676.9 727.8,676.9 727.8,674.6" stroke="#ff0000"/>
<polyline points="696.6,666.0 701.2,669.9 705.9,676.1 710.6,673.8 713.8,673.8" stroke="#ff0000"/>
<polyline points="730.9,680.0 734.0,685.5 738.8,687.8 743.4,687.8 748.1,690.2 751.2,688.6 755.9,691.8" stroke="#ff0000"/>
<polyline points="770.8,697.2 766.1,703.5" stroke="#ff0000"/>
<polyline points="759.8,716.8 755.9,726.9" stroke="#ff0000"/>
<polyline points="764.5,745.6 776.2,744.1 777.0,738.6 780.0,737.8" stroke="#ff0000"/>
<polyline points="745.0,748.8 741.9,751.1 742.6,755.0 738.0,758.9" stroke="#ff0000"/>
<polyline points="712.0,621.0 713.0,621.0" stroke="#ff0000"/>
<polyline points="717.0,621.0 718.0,621.0" stroke="#ff0000"/>
<polyline points="709.0,625.0 711.0,626.0" stroke="#ff0000"/>
<polyline points="691.9,648.0 688.8,655.8 686.4,659.0" stroke="#000080"/>
<polyline points="696.6,672.2 702.8,685.5 708.3,701.1 712.2,705.8 711.4,713.6 708.3,724.6 707.5,728.5" stroke="#000080"/>
<polyline points="620.0,694.1 622.3,694.9" stroke="#000080"/>
<polyline points="644.2,696.4 649.7,695.6 660.6,691.8 673.1,693.3 680.9,698.0 688.8,706.6 694.2,708.2 698.1,713.6 700.5,728.5" stroke="#000080"/>
<polyline points="634.8,708.2 643.4,716.0 651.2,716.0 661.4,712.1 666.9,711.3" stroke="#000080"/>
<polyline points="627.8,736.3 637.2,740.2 644.2,746.4 647.3,757.4" stroke="#000080"/>
<polyline points="679.4,725.3 688.8,748.0" stroke="#000080"/>
<polyline points="721.6,685.5 727.8,677.7" stroke="#000080"/>
<polyline points="723.1,710.5 726.2,716.8" stroke="#000080"/>
<polyline points="733.3,729.2 734.0,731.6" stroke="#000080"/>
<polyline points="711.0,632.0 692.5,640.5 689.7,655.5 685.0,659.0" stroke="#000080"/>
<polyline points="642.0,745.0 646.0,768.0" stroke="#000080"/>
<polyline points="869.9,694.9 877.8,698.8 887.1,706.6" stroke="#000080"/>
<polyline points="902.8,713.6 909.0,718.3 919.9,721.4" stroke="#000080"/>
<polyline points="835.6,703.5 846.5,703.5" stroke="#000080"/>
<polyline points="813.7,715.2 816.8,713.6" stroke="#000080"/>
<polyline points="784.0,730.8 793.4,726.9" stroke="#000080"/>
<polyline points="865.2,727.7 868.4,723.0 877.8,720.6" stroke="#000080"/>
<polyline points="863.7,727.7 862.9,738.6 865.2,743.3 859.0,748.0 852.8,752.7 837.1,754.2" stroke="#000080"/>
<polyline points="893.4,763.6 905.9,760.5 921.5,757.4 929.3,754.2" stroke="#000080"/>
<polyline points="801.2,754.2 800.4,760.5" stroke="#000080"/>
<polyline points="871.5,668.3 873.0,671.4" stroke="#ff0000"/>
<polyline points="886.3,685.5 887.1,687.0" stroke="#ff0000"/>
<polyline points="880.9,723.0 880.1,725.3" stroke="#ff0000"/>
<polyline points="914.5,709.0 919.9,709.0 927.8,704.2 930.9,698.0 934.0,694.9 944.0,695.6" stroke="#ff0000"/>
<polyline points="862.1,743.3 868.4,740.2 870.7,742.6" stroke="#ff0000"/>
<polyline points="784.0,738.6 790.2,741.0 802.8,746.4" stroke="#ff0000"/>
<polyline points="829.3,744.9 834.0,747.2 835.6,750.3" stroke="#ff0000"/>
<polyline points="802.0,755.8 801.2,763.6 809.8,766.8" stroke="#ff0000"/>
<polyline points="841.8,766.8 865.2,762.8 865.2,768.0" stroke="#ff0000"/>
<polyline points="793.4,739.4 802.8,746.4" stroke="#808080"/>
<polyline points="796.0,742.0 800.0,745.0" stroke="#808080"/>
<polyline points="942.2,628.4 949.9,630.6 963.0,633.9 964.1,636.0" stroke="#ff0000"/>
<polyline points="979.4,642.6 986.0,647.0 994.7,648.1 995.8,651.4 1000.2,655.7" stroke="#ff0000"/>
<polyline points="967.4,649.2 969.6,652.5 975.0,652.5 977.2,649.2" stroke="#ff0000"/>
<polyline points="1016.6,663.4 1019.8,670.0 1023.0,673.2" stroke="#ff0000"/>
<polyline points="1023.0,675.4 1015.5,676.5 1006.7,685.2 1000.2,691.8 991.4,698.4 983.8,699.5 978.3,702.7 976.1,711.5 978.3,722.4 982.7,729.0 980.5,737.7 978.3,742.0" stroke="#ff0000"/>
<polyline points="913.8,708.2 925.9,704.9 930.2,700.5 932.4,696.2 942.2,695.1 946.6,699.5" stroke="#ff0000"/>
<polyline points="963.0,702.7 967.4,700.5 977.2,703.8" stroke="#ff0000"/>
<polyline points="982.7,729.0 995.8,735.5 1001.3,738.8 1006.7,738.8" stroke="#ff0000"/>
<polyline points="969.6,748.6 970.7,750.8" stroke="#ff0000"/>
<polyline points="961.9,764.0 967.4,762.8" stroke="#ff0000"/>
<polyline points="1023.0,729.0 1022.0,733.3" stroke="#ff0000"/>
<polyline points="912.0,623.0 909.5,638.2 917.1,645.9 913.8,650.3 918.2,654.6 917.1,667.8 912.7,672.1 914.9,691.8 916.0,708.2" stroke="#000080"/>
<polyline points="917.1,645.9 936.8,652.5" stroke="#000080"/>
<polyline points="943.3,632.8 949.9,641.5 952.1,652.5" stroke="#000080"/>
<polyline points="963.0,600.0 967.4,609.8" stroke="#000080"/>
<polyline points="983.8,620.8 995.8,628.4 1004.5,641.5 1006.7,650.3" stroke="#000080"/>
<polyline points="975.0,652.5 978.3,663.4 984.9,671.0" stroke="#000080"/>
<polyline points="994.7,667.8 991.4,674.3" stroke="#000080"/>
<polyline points="991.4,686.3 989.2,694.0 983.8,699.5" stroke="#000080"/>
<polyline points="904.0,715.8 917.1,720.2" stroke="#000080"/>
<polyline points="955.4,715.8 966.3,722.4 978.3,725.7" stroke="#000080"/>
<polyline points="982.7,729.0 998.0,738.8" stroke="#000080"/>
<polyline points="942.2,760.7 943.3,768.0" stroke="#000080"/>
<polyline points="467.2,646.7 471.3,646.3" stroke="#808080"/>
<polyline points="478.0,645.0 486.3,648.3 493.0,643.3 493.8,640.0" stroke="#808080"/>
<polyline points="543.0,669.2 547.2,670.8 546.3,677.5 553.0,680.8" stroke="#808080"/>
<polyline points="532.2,675.0 537.2,685.0 539.7,696.7 539.7,704.2 544.7,707.5 536.3,707.5 531.3,706.7 528.8,710.8 521.3,705.0" stroke="#808080"/>
<polyline points="486.3,705.0 491.3,701.7 501.3,701.7 507.2,703.3" stroke="#808080"/>
<polyline points="523.8,685.0 528.0,685.0" stroke="#808080"/>
<polyline points="464.7,727.5 471.3,727.5 470.5,730.0" stroke="#808080"/>
<polyline points="484.7,735.0 498.0,740.0 502.2,740.0 502.2,747.5" stroke="#808080"/>
<polyline points="518.0,751.7 519.7,755.0 528.0,755.0 524.7,758.3 526.3,763.3 527.2,766.7" stroke="#808080"/>
<polyline points="583.0,668.3 588.8,664.2" stroke="#808080"/>
<polyline points="592.4,675.0 603.7,682.5 615.0,693.8 622.4,694.7" stroke="#000080"/>
<polyline points="544.7,754.2 553.0,752.5" stroke="#000080"/>
<polyline points="571.8,753.8 579.3,757.5 607.4,747.2 616.8,737.0 620.0,735.0" stroke="#000080"/>
<polyline points="814.2,525.6 821.2,528.0 832.2,533.4 841.6,538.9 852.5,542.8 858.8,547.5 861.1,553.8 859.5,564.7 855.6,570.2" stroke="#000080"/>
<polyline points="883.0,534.2 889.2,537.3 892.3,546.0 891.6,555.3 889.2,563.1 899.4,566.2 913.4,570.2" stroke="#000080"/>
<polyline points="863.4,552.2 866.6,556.9 871.2,567.8 877.5,564.7 882.2,565.5" stroke="#000080"/>
<polyline points="858.0,584.2 867.3,589.0" stroke="#000080"/>
<polyline points="879.8,594.4 888.4,602.2 893.1,610.0 899.4,616.2 911.9,622.5 913.4,630.0" stroke="#000080"/>
<polyline points="913.4,577.2 907.2,578.8 905.6,583.4 910.3,585.8" stroke="#000080"/>
<polyline points="927.5,580.3 940.0,580.3 950.0,585.0" stroke="#000080"/>
<polyline points="917.3,599.0 920.5,606.9 921.2,613.1" stroke="#000080"/>
<polyline points="913.4,510.0 915.0,521.0" stroke="#ff0000"/>
<polyline points="918.0,535.0 917.3,537.3" stroke="#ff0000"/>
<polyline points="921.2,560.0 922.8,562.3" stroke="#ff0000"/>
<polyline points="924.4,575.6 926.7,580.3 924.4,584.2" stroke="#ff0000"/>
<polyline points="924.4,596.0 927.5,603.8 931.4,604.5 933.0,611.6" stroke="#ff0000"/>
<polyline points="916.6,617.8 913.4,625.6 905.6,630.0 896.0,635.0" stroke="#ff0000"/>
<polyline points="867.7,200.0 869.7,205.2" stroke="#ff0000"/>
<polyline points="872.9,216.9 874.2,222.8 871.0,238.4 865.1,243.6 857.3,249.5 856.6,257.3 853.4,263.8 856.0,272.9 853.4,284.6 849.5,293.8 846.9,289.8" stroke="#ff0000"/>
<polyline points="842.3,284.6 845.6,286.6" stroke="#ff0000"/>
<polyline points="850.1,200.0 853.4,205.2" stroke="#000080"/>
<polyline points="860.5,219.5 861.2,230.0 850.1,233.2" stroke="#000080"/>
<polyline points="845.6,239.7 840.4,245.6" stroke="#000080"/>
<polyline points="841.7,258.0 840.4,265.1" stroke="#000080"/>
<polyline points="828.0,200.0 835.2,205.2 837.8,202.6 843.0,215.0 842.3,222.8" stroke="#808080"/>
<polyline points="839.0,245.0 843.0,251.4" stroke="#808080"/>
<polyline points="819.5,257.3 829.3,264.5" stroke="#808080"/>
<polyline points="843.0,280.7 845.6,284.0" stroke="#808080"/>
</svg>
<div id="hd"><span style="left:3px;letter-spacing:0.35px">DON 08.11.07 00:00 UTC</span><span style="left:157px;letter-spacing:-0.28px">Bodenwettermeldungen</span><span style="left:292px">:</span><span style="left:304px;letter-spacing:0.15px">Temperatur / °C</span></div>
<div class="g" style="left:90px;top:17px">20W</div>
<div class="g" style="left:327px;top:17px">10W</div>
<div class="g" style="left:574px;top:17px">0</div>
<div class="g" style="left:7px;top:236px">60N</div>
<div class="g" style="left:7px;top:457px">55N</div>
<div class="g" style="left:7px;top:652px">50N</div>
<svg width="1024" height="768" shape-rendering="crispEdges" style="position:absolute;left:0;top:0"><defs><path id="d0" d="M1 0h4v1h-4zM0 1h2v1h-2zM4 1h2v1h-2zM0 2h2v1h-2zM4 2h2v1h-2zM0 3h2v1h-2zM4 3h2v1h-2zM0 4h2v1h-2zM4 4h2v1h-2zM0 5h2v1h-2zM4 5h2v1h-2zM0 6h2v1h-2zM4 6h2v1h-2zM0 7h2v1h-2zM4 7h2v1h-2zM1 8h4v1h-4z"/><path id="d1" d="M2 0h2v1h-2zM0 1h4v1h-4zM2 2h2v1h-2zM2 3h2v1h-2zM2 4h2v1h-2zM2 5h2v1h-2zM2 6h2v1h-2zM2 7h2v1h-2zM2 8h2v1h-2z"/><path id="d2" d="M1 0h4v1h-4zM0 1h2v1h-2zM4 1h2v1h-2zM4 2h2v1h-2zM3 3h2v1h-2zM2 4h2v1h-2zM1 5h2v1h-2zM0 6h2v1h-2zM0 7h2v1h-2zM0 8h6v1h-6z"/><path id="d3" d="M1 0h4v1h-4zM0 1h2v1h-2zM4 1h2v1h-2zM4 2h2v1h-2zM4 3h2v1h-2zM2 4h3v1h-3zM4 5h2v1h-2zM4 6h2v1h-2zM0 7h2v1h-2zM4 7h2v1h-2zM1 8h4v1h-4z"/><path id="d4" d="M3 0h2v1h-2zM2 1h3v1h-3zM2 2h3v1h-3zM1 3h4v1h-4zM1 4h4v1h-4zM0 5h2v1h-2zM3 5h2v1h-2zM0 6h6v1h-6zM3 7h2v1h-2zM3 8h2v1h-2z"/><path id="d5" d="M0 0h6v1h-6zM0 1h2v1h-2zM0 2h2v1h-2zM0 3h5v1h-5zM4 4h2v1h-2zM4 5h2v1h-2zM4 6h2v1h-2zM0 7h2v1h-2zM4 7h2v1h-2zM1 8h4v1h-4z"/><path id="d6" d="M1 0h4v1h-4zM0 1h2v1h-2zM4 1h2v1h-2zM0 2h2v1h-2zM0 3h2v1h-2zM0 4h5v1h-5zM0 5h2v1h-2zM4 5h2v1h-2zM0 6h2v1h-2zM4 6h2v1h-2zM0 7h2v1h-2zM4 7h2v1h-2zM1 8h4v1h-4z"/><path id="d7" d="M0 0h6v1h-6zM4 1h2v1h-2zM3 2h2v1h-2zM3 3h2v1h-2zM2 4h2v1h-2zM2 5h2v1h-2zM1 6h2v1h-2zM1 7h2v1h-2zM1 8h2v1h-2z"/><path id="d8" d="M1 0h4v1h-4zM0 1h2v1h-2zM4 1h2v1h-2zM0 2h2v1h-2zM4 2h2v1h-2zM0 3h2v1h-2zM4 3h2v1h-2zM1 4h4v1h-4zM0 5h2v1h-2zM4 5h2v1h-2zM0 6h2v1h-2zM4 6h2v1h-2zM0 7h2v1h-2zM4 7h2v1h-2zM1 8h4v1h-4z"/><path id="d9" d="M1 0h4v1h-4zM0 1h2v1h-2zM4 1h2v1h-2zM0 2h2v1h-2zM4 2h2v1h-2zM0 3h2v1h-2zM4 3h2v1h-2zM1 4h5v1h-5zM4 5h2v1h-2zM4 6h2v1h-2zM0 7h2v1h-2zM4 7h2v1h-2zM1 8h4v1h-4z"/><path id="dp" d="M0 8h2v1h-2z"/><path id="dm" d="M0 5h3v1h-3z"/></defs><g fill="#00ffff"><use href="#d0" x="32" y="37"/><use href="#dp" x="39" y="37"/><use href="#d4" x="43" y="37"/><use href="#d0" x="66" y="42"/><use href="#dp" x="73" y="42"/><use href="#d0" x="77" y="42"/><use href="#d1" x="139" y="46"/><use href="#dp" x="146" y="46"/><use href="#d3" x="150" y="46"/><use href="#d0" x="86" y="67"/><use href="#dp" x="93" y="67"/><use href="#d9" x="97" y="67"/><use href="#d4" x="723" y="96"/><use href="#dp" x="730" y="96"/><use href="#d1" x="734" y="96"/><use href="#d4" x="713" y="111"/><use href="#dp" x="720" y="111"/><use href="#d0" x="724" y="111"/><use href="#d1" x="744" y="128"/><use href="#dp" x="751" y="128"/><use href="#d6" x="755" y="128"/><use href="#d0" x="723" y="145"/><use href="#dp" x="730" y="145"/><use href="#d7" x="734" y="145"/><use href="#d4" x="725" y="182"/><use href="#dp" x="732" y="182"/><use href="#d8" x="736" y="182"/><use href="#d4" x="815" y="14"/><use href="#dp" x="822" y="14"/><use href="#d5" x="826" y="14"/><use href="#d4" x="791" y="27"/><use href="#dp" x="798" y="27"/><use href="#d1" x="802" y="27"/><use href="#d2" x="839" y="35"/><use href="#dp" x="846" y="35"/><use href="#d1" x="850" y="35"/><use href="#d4" x="768" y="44"/><use href="#dp" x="775" y="44"/><use href="#d6" x="779" y="44"/><use href="#d2" x="827" y="64"/><use href="#dp" x="834" y="64"/><use href="#d8" x="838" y="64"/><use href="#d1" x="800" y="78"/><use href="#dp" x="807" y="78"/><use href="#d9" x="811" y="78"/><use href="#d0" x="988" y="129"/><use href="#dp" x="995" y="129"/><use href="#d0" x="999" y="129"/><use href="#d1" x="639" y="214"/><use href="#dp" x="646" y="214"/><use href="#d1" x="650" y="214"/><use href="#d2" x="720" y="208"/><use href="#dp" x="727" y="208"/><use href="#d2" x="731" y="208"/><use href="#d4" x="716" y="221"/><use href="#dp" x="723" y="221"/><use href="#d6" x="727" y="221"/><use href="#d3" x="719" y="254"/><use href="#dp" x="726" y="254"/><use href="#d9" x="730" y="254"/><use href="#d2" x="787" y="190"/><use href="#dp" x="794" y="190"/><use href="#d1" x="798" y="190"/><use href="#d3" x="1003" y="212"/><use href="#dp" x="1010" y="212"/><use href="#d4" x="1014" y="212"/><use href="#d1" x="820" y="239"/><use href="#dp" x="827" y="239"/><use href="#d6" x="831" y="239"/><use href="#d1" x="997" y="257"/><use href="#dp" x="1004" y="257"/><use href="#d8" x="1008" y="257"/><use href="#d3" x="786" y="267"/><use href="#dp" x="793" y="267"/><use href="#d3" x="797" y="267"/><use href="#d2" x="823" y="267"/><use href="#dp" x="830" y="267"/><use href="#d3" x="834" y="267"/><use href="#d4" x="1011" y="271"/><use href="#dp" x="1018" y="271"/><use href="#d3" x="1022" y="271"/><use href="#d0" x="956" y="282"/><use href="#dp" x="963" y="282"/><use href="#d5" x="967" y="282"/><use href="#d3" x="991" y="295"/><use href="#dp" x="998" y="295"/><use href="#d7" x="1002" y="295"/><use href="#d0" x="950" y="304"/><use href="#dp" x="957" y="304"/><use href="#d8" x="961" y="304"/><use href="#d2" x="909" y="324"/><use href="#dp" x="916" y="324"/><use href="#d4" x="920" y="324"/><use href="#d2" x="971" y="319"/><use href="#dp" x="978" y="319"/><use href="#d4" x="982" y="319"/><use href="#d2" x="958" y="343"/><use href="#dp" x="965" y="343"/><use href="#d1" x="969" y="343"/><use href="#d2" x="943" y="357"/><use href="#dp" x="950" y="357"/><use href="#d0" x="954" y="357"/><use href="#d0" x="897" y="380"/><use href="#dp" x="904" y="380"/><use href="#d9" x="908" y="380"/><use href="#d4" x="957" y="388"/><use href="#dp" x="964" y="388"/><use href="#d4" x="968" y="388"/><use href="#d4" x="940" y="419"/><use href="#dp" x="947" y="419"/><use href="#d8" x="951" y="419"/><use href="#d4" x="984" y="511"/><use href="#dp" x="991" y="511"/><use href="#d5" x="995" y="511"/><use href="#d4" x="965" y="534"/><use href="#dp" x="972" y="534"/><use href="#d4" x="976" y="534"/><use href="#d4" x="1008" y="537"/><use href="#dp" x="1015" y="537"/><use href="#d0" x="1019" y="537"/><use href="#d4" x="1010" y="571"/><use href="#dp" x="1017" y="571"/><use href="#d8" x="1021" y="571"/><use href="#d4" x="996" y="587"/><use href="#dp" x="1003" y="587"/><use href="#d2" x="1007" y="587"/><use href="#d4" x="968" y="613"/><use href="#dp" x="975" y="613"/><use href="#d0" x="979" y="613"/><use href="#d4" x="924" y="626"/><use href="#dp" x="931" y="626"/><use href="#d4" x="935" y="626"/><use href="#d4" x="999" y="652"/><use href="#dp" x="1006" y="652"/><use href="#d8" x="1010" y="652"/><use href="#d4" x="997" y="665"/><use href="#dp" x="1004" y="665"/><use href="#d5" x="1008" y="665"/><use href="#d3" x="817" y="755"/><use href="#dp" x="824" y="755"/><use href="#d6" x="828" y="755"/><use href="#d3" x="941" y="668"/><use href="#dp" x="948" y="668"/><use href="#d3" x="952" y="668"/><use href="#d3" x="924" y="748"/><use href="#dp" x="931" y="748"/><use href="#d9" x="935" y="748"/><use href="#d4" x="877" y="753"/><use href="#dp" x="884" y="753"/><use href="#d0" x="888" y="753"/><use href="#d4" x="883" y="762"/><use href="#dp" x="890" y="762"/><use href="#d4" x="894" y="762"/></g><g fill="#00b0b0"><use href="#d8" x="385" y="135"/><use href="#dp" x="392" y="135"/><use href="#d8" x="396" y="135"/><use href="#d9" x="410" y="169"/><use href="#dp" x="417" y="169"/><use href="#d6" x="421" y="169"/><use href="#d5" x="756" y="62"/><use href="#dp" x="763" y="62"/><use href="#d6" x="767" y="62"/><use href="#d5" x="693" y="123"/><use href="#dp" x="700" y="123"/><use href="#d8" x="704" y="123"/><use href="#d5" x="686" y="137"/><use href="#dp" x="693" y="137"/><use href="#d9" x="697" y="137"/><use href="#d6" x="679" y="162"/><use href="#dp" x="686" y="162"/><use href="#d4" x="690" y="162"/><use href="#d6" x="622" y="180"/><use href="#dp" x="629" y="180"/><use href="#d2" x="633" y="180"/><use href="#d8" x="548" y="202"/><use href="#dp" x="555" y="202"/><use href="#d4" x="559" y="202"/><use href="#d7" x="680" y="202"/><use href="#dp" x="687" y="202"/><use href="#d0" x="691" y="202"/><use href="#d7" x="688" y="242"/><use href="#dp" x="695" y="242"/><use href="#d6" x="699" y="242"/><use href="#d7" x="684" y="271"/><use href="#dp" x="691" y="271"/><use href="#d1" x="695" y="271"/><use href="#d7" x="702" y="290"/><use href="#dp" x="709" y="290"/><use href="#d8" x="713" y="290"/><use href="#d8" x="700" y="301"/><use href="#dp" x="707" y="301"/><use href="#d3" x="711" y="301"/><use href="#d7" x="735" y="330"/><use href="#dp" x="742" y="330"/><use href="#d8" x="746" y="330"/><use href="#d6" x="758" y="321"/><use href="#dp" x="765" y="321"/><use href="#d5" x="769" y="321"/><use href="#d6" x="824" y="278"/><use href="#dp" x="831" y="278"/><use href="#d6" x="835" y="278"/><use href="#d7" x="794" y="291"/><use href="#dp" x="801" y="291"/><use href="#d1" x="805" y="291"/><use href="#d7" x="829" y="289"/><use href="#dp" x="836" y="289"/><use href="#d2" x="840" y="289"/><use href="#d5" x="785" y="301"/><use href="#dp" x="792" y="301"/><use href="#d5" x="796" y="301"/><use href="#d5" x="879" y="298"/><use href="#dp" x="886" y="298"/><use href="#d2" x="890" y="298"/><use href="#d8" x="836" y="324"/><use href="#dp" x="843" y="324"/><use href="#d7" x="847" y="324"/><use href="#d8" x="843" y="346"/><use href="#dp" x="850" y="346"/><use href="#d9" x="854" y="346"/><use href="#d5" x="1005" y="353"/><use href="#dp" x="1012" y="353"/><use href="#d2" x="1016" y="353"/><use href="#d9" x="850" y="360"/><use href="#dp" x="857" y="360"/><use href="#d3" x="861" y="360"/><use href="#d6" x="804" y="366"/><use href="#dp" x="811" y="366"/><use href="#d9" x="815" y="366"/><use href="#d8" x="773" y="376"/><use href="#dp" x="780" y="376"/><use href="#d0" x="784" y="376"/><use href="#d6" x="998" y="378"/><use href="#dp" x="1005" y="378"/><use href="#d5" x="1009" y="378"/><use href="#d9" x="492" y="445"/><use href="#dp" x="499" y="445"/><use href="#d9" x="503" y="445"/><use href="#d8" x="555" y="528"/><use href="#dp" x="562" y="528"/><use href="#d5" x="566" y="528"/><use href="#d9" x="594" y="540"/><use href="#dp" x="601" y="540"/><use href="#d1" x="605" y="540"/><use href="#d9" x="551" y="550"/><use href="#dp" x="558" y="550"/><use href="#d6" x="562" y="550"/><use href="#d9" x="763" y="387"/><use href="#dp" x="770" y="387"/><use href="#d3" x="774" y="387"/><use href="#d6" x="784" y="404"/><use href="#dp" x="791" y="404"/><use href="#d7" x="795" y="404"/><use href="#d9" x="761" y="417"/><use href="#dp" x="768" y="417"/><use href="#d6" x="772" y="417"/><use href="#d9" x="759" y="436"/><use href="#dp" x="766" y="436"/><use href="#d5" x="770" y="436"/><use href="#d9" x="767" y="458"/><use href="#dp" x="774" y="458"/><use href="#d7" x="778" y="458"/><use href="#d8" x="841" y="386"/><use href="#dp" x="848" y="386"/><use href="#d7" x="852" y="386"/><use href="#d5" x="807" y="393"/><use href="#dp" x="814" y="393"/><use href="#d5" x="818" y="393"/><use href="#d8" x="865" y="398"/><use href="#dp" x="872" y="398"/><use href="#d3" x="876" y="398"/><use href="#d8" x="845" y="408"/><use href="#dp" x="852" y="408"/><use href="#d1" x="856" y="408"/><use href="#d5" x="956" y="408"/><use href="#dp" x="963" y="408"/><use href="#d0" x="967" y="408"/><use href="#d8" x="825" y="426"/><use href="#dp" x="832" y="426"/><use href="#d1" x="836" y="426"/><use href="#d6" x="865" y="426"/><use href="#dp" x="872" y="426"/><use href="#d3" x="876" y="426"/><use href="#d7" x="813" y="438"/><use href="#dp" x="820" y="438"/><use href="#d8" x="824" y="438"/><use href="#d7" x="871" y="443"/><use href="#dp" x="878" y="443"/><use href="#d5" x="882" y="443"/><use href="#d7" x="917" y="445"/><use href="#dp" x="924" y="445"/><use href="#d6" x="928" y="445"/><use href="#d7" x="917" y="456"/><use href="#dp" x="924" y="456"/><use href="#d3" x="928" y="456"/><use href="#d8" x="832" y="451"/><use href="#dp" x="839" y="451"/><use href="#d5" x="843" y="451"/><use href="#d8" x="828" y="465"/><use href="#dp" x="835" y="465"/><use href="#d3" x="839" y="465"/><use href="#d7" x="993" y="465"/><use href="#dp" x="1000" y="465"/><use href="#d4" x="1004" y="465"/><use href="#d9" x="830" y="476"/><use href="#dp" x="837" y="476"/><use href="#d1" x="841" y="476"/><use href="#d8" x="879" y="476"/><use href="#dp" x="886" y="476"/><use href="#d2" x="890" y="476"/><use href="#d8" x="967" y="476"/><use href="#dp" x="974" y="476"/><use href="#d0" x="978" y="476"/><use href="#d8" x="793" y="480"/><use href="#dp" x="800" y="480"/><use href="#d2" x="804" y="480"/><use href="#d6" x="1011" y="483"/><use href="#dp" x="1018" y="483"/><use href="#d0" x="1022" y="483"/><use href="#d9" x="854" y="491"/><use href="#dp" x="861" y="491"/><use href="#d0" x="865" y="491"/><use href="#d7" x="898" y="489"/><use href="#dp" x="905" y="489"/><use href="#d7" x="909" y="489"/><use href="#d9" x="937" y="492"/><use href="#dp" x="944" y="492"/><use href="#d0" x="948" y="492"/><use href="#d7" x="794" y="500"/><use href="#dp" x="801" y="500"/><use href="#d9" x="805" y="500"/><use href="#d8" x="859" y="503"/><use href="#dp" x="866" y="503"/><use href="#d4" x="870" y="503"/><use href="#d6" x="892" y="506"/><use href="#dp" x="899" y="506"/><use href="#d1" x="903" y="506"/><use href="#d6" x="933" y="508"/><use href="#dp" x="940" y="508"/><use href="#d9" x="944" y="508"/><use href="#d8" x="804" y="514"/><use href="#dp" x="811" y="514"/><use href="#d2" x="815" y="514"/><use href="#d7" x="838" y="514"/><use href="#dp" x="845" y="514"/><use href="#d0" x="849" y="514"/><use href="#d6" x="914" y="524"/><use href="#dp" x="921" y="524"/><use href="#d5" x="925" y="524"/><use href="#d5" x="949" y="524"/><use href="#dp" x="956" y="524"/><use href="#d4" x="960" y="524"/><use href="#d9" x="796" y="530"/><use href="#dp" x="803" y="530"/><use href="#d6" x="807" y="530"/><use href="#d6" x="864" y="532"/><use href="#dp" x="871" y="532"/><use href="#d9" x="875" y="532"/><use href="#d5" x="899" y="537"/><use href="#dp" x="906" y="537"/><use href="#d9" x="910" y="537"/><use href="#d7" x="862" y="542"/><use href="#dp" x="869" y="542"/><use href="#d4" x="873" y="542"/><use href="#d9" x="796" y="545"/><use href="#dp" x="803" y="545"/><use href="#d6" x="807" y="545"/><use href="#d7" x="871" y="553"/><use href="#dp" x="878" y="553"/><use href="#d3" x="882" y="553"/><use href="#d7" x="838" y="557"/><use href="#dp" x="845" y="557"/><use href="#d5" x="849" y="557"/><use href="#d5" x="967" y="561"/><use href="#dp" x="974" y="561"/><use href="#d7" x="978" y="561"/><use href="#d9" x="797" y="562"/><use href="#dp" x="804" y="562"/><use href="#d6" x="808" y="562"/><use href="#d7" x="914" y="564"/><use href="#dp" x="921" y="564"/><use href="#d0" x="925" y="564"/><use href="#d9" x="525" y="609"/><use href="#dp" x="532" y="609"/><use href="#d3" x="536" y="609"/><use href="#d9" x="644" y="661"/><use href="#dp" x="651" y="661"/><use href="#d0" x="655" y="661"/><use href="#d9" x="527" y="723"/><use href="#dp" x="534" y="723"/><use href="#d9" x="538" y="723"/><use href="#d9" x="570" y="710"/><use href="#dp" x="577" y="710"/><use href="#d8" x="581" y="710"/><use href="#d9" x="603" y="709"/><use href="#dp" x="610" y="709"/><use href="#d6" x="614" y="709"/><use href="#d9" x="610" y="726"/><use href="#dp" x="617" y="726"/><use href="#d0" x="621" y="726"/><use href="#d6" x="503" y="740"/><use href="#dp" x="510" y="740"/><use href="#d7" x="514" y="740"/><use href="#d9" x="554" y="744"/><use href="#dp" x="561" y="744"/><use href="#d7" x="565" y="744"/><use href="#d9" x="608" y="750"/><use href="#dp" x="615" y="750"/><use href="#d3" x="619" y="750"/><use href="#d8" x="530" y="755"/><use href="#dp" x="537" y="755"/><use href="#d2" x="541" y="755"/><use href="#d9" x="724" y="534"/><use href="#dp" x="731" y="534"/><use href="#d5" x="735" y="534"/><use href="#d9" x="761" y="532"/><use href="#dp" x="768" y="532"/><use href="#d0" x="772" y="532"/><use href="#d7" x="722" y="550"/><use href="#dp" x="729" y="550"/><use href="#d1" x="733" y="550"/><use href="#d8" x="756" y="559"/><use href="#dp" x="763" y="559"/><use href="#d1" x="767" y="559"/><use href="#d9" x="716" y="562"/><use href="#dp" x="723" y="562"/><use href="#d4" x="727" y="562"/><use href="#d9" x="691" y="574"/><use href="#dp" x="698" y="574"/><use href="#d0" x="702" y="574"/><use href="#d8" x="725" y="576"/><use href="#dp" x="732" y="576"/><use href="#d9" x="736" y="576"/><use href="#d9" x="789" y="574"/><use href="#dp" x="796" y="574"/><use href="#d2" x="800" y="574"/><use href="#d7" x="712" y="587"/><use href="#dp" x="719" y="587"/><use href="#d9" x="723" y="587"/><use href="#d8" x="746" y="587"/><use href="#dp" x="753" y="587"/><use href="#d1" x="757" y="587"/><use href="#d8" x="823" y="584"/><use href="#dp" x="830" y="584"/><use href="#d1" x="834" y="584"/><use href="#d8" x="716" y="597"/><use href="#dp" x="723" y="597"/><use href="#d1" x="727" y="597"/><use href="#d7" x="752" y="598"/><use href="#dp" x="759" y="598"/><use href="#d7" x="763" y="598"/><use href="#d9" x="787" y="594"/><use href="#dp" x="794" y="594"/><use href="#d2" x="798" y="594"/><use href="#d9" x="704" y="609"/><use href="#dp" x="711" y="609"/><use href="#d0" x="715" y="609"/><use href="#d8" x="738" y="608"/><use href="#dp" x="745" y="608"/><use href="#d3" x="749" y="608"/><use href="#d9" x="798" y="610"/><use href="#dp" x="805" y="610"/><use href="#d6" x="809" y="610"/><use href="#d9" x="711" y="624"/><use href="#dp" x="718" y="624"/><use href="#d2" x="722" y="624"/><use href="#d8" x="765" y="621"/><use href="#dp" x="772" y="621"/><use href="#d3" x="776" y="621"/><use href="#d9" x="804" y="627"/><use href="#dp" x="811" y="627"/><use href="#d9" x="815" y="627"/><use href="#d9" x="673" y="636"/><use href="#dp" x="680" y="636"/><use href="#d3" x="684" y="636"/><use href="#d8" x="775" y="640"/><use href="#dp" x="782" y="640"/><use href="#d8" x="786" y="640"/><use href="#d6" x="728" y="645"/><use href="#dp" x="735" y="645"/><use href="#d7" x="739" y="645"/><use href="#d8" x="719" y="656"/><use href="#dp" x="726" y="656"/><use href="#d5" x="730" y="656"/><use href="#d9" x="753" y="658"/><use href="#dp" x="760" y="658"/><use href="#d7" x="764" y="658"/><use href="#d9" x="678" y="662"/><use href="#dp" x="685" y="662"/><use href="#d8" x="689" y="662"/><use href="#d7" x="728" y="669"/><use href="#dp" x="735" y="669"/><use href="#d6" x="739" y="669"/><use href="#d8" x="843" y="573"/><use href="#dp" x="850" y="573"/><use href="#d0" x="854" y="573"/><use href="#d7" x="869" y="583"/><use href="#dp" x="876" y="583"/><use href="#d4" x="880" y="583"/><use href="#d7" x="908" y="587"/><use href="#dp" x="915" y="587"/><use href="#d6" x="919" y="587"/><use href="#d5" x="960" y="585"/><use href="#dp" x="967" y="585"/><use href="#d5" x="971" y="585"/><use href="#d7" x="862" y="605"/><use href="#dp" x="869" y="605"/><use href="#d8" x="873" y="605"/><use href="#d5" x="1008" y="608"/><use href="#dp" x="1015" y="608"/><use href="#d0" x="1019" y="608"/><use href="#d5" x="961" y="638"/><use href="#dp" x="968" y="638"/><use href="#d0" x="972" y="638"/><use href="#d6" x="932" y="656"/><use href="#dp" x="939" y="656"/><use href="#d2" x="943" y="656"/><use href="#d9" x="762" y="673"/><use href="#dp" x="769" y="673"/><use href="#d8" x="773" y="673"/><use href="#d9" x="796" y="681"/><use href="#dp" x="803" y="681"/><use href="#d6" x="807" y="681"/><use href="#d9" x="713" y="686"/><use href="#dp" x="720" y="686"/><use href="#d1" x="724" y="686"/><use href="#d8" x="757" y="686"/><use href="#dp" x="764" y="686"/><use href="#d6" x="768" y="686"/><use href="#d8" x="715" y="701"/><use href="#dp" x="722" y="701"/><use href="#d5" x="726" y="701"/><use href="#d8" x="749" y="706"/><use href="#dp" x="756" y="706"/><use href="#d8" x="760" y="706"/><use href="#d8" x="663" y="714"/><use href="#dp" x="670" y="714"/><use href="#d7" x="674" y="714"/><use href="#d6" x="720" y="718"/><use href="#dp" x="727" y="718"/><use href="#d7" x="731" y="718"/><use href="#d8" x="761" y="717"/><use href="#dp" x="768" y="717"/><use href="#d8" x="772" y="717"/><use href="#d9" x="796" y="717"/><use href="#dp" x="803" y="717"/><use href="#d6" x="807" y="717"/><use href="#d7" x="743" y="728"/><use href="#dp" x="750" y="728"/><use href="#d6" x="754" y="728"/><use href="#d8" x="652" y="733"/><use href="#dp" x="659" y="733"/><use href="#d3" x="663" y="733"/><use href="#d6" x="694" y="731"/><use href="#dp" x="701" y="731"/><use href="#d1" x="705" y="731"/><use href="#d8" x="746" y="739"/><use href="#dp" x="753" y="739"/><use href="#d4" x="757" y="739"/><use href="#d8" x="688" y="752"/><use href="#dp" x="695" y="752"/><use href="#d2" x="699" y="752"/><use href="#d5" x="774" y="752"/><use href="#dp" x="781" y="752"/><use href="#d1" x="785" y="752"/><use href="#d7" x="641" y="760"/><use href="#dp" x="648" y="760"/><use href="#d7" x="652" y="760"/><use href="#d7" x="732" y="760"/><use href="#dp" x="739" y="760"/><use href="#d0" x="743" y="760"/><use href="#d5" x="979" y="675"/><use href="#dp" x="986" y="675"/><use href="#d5" x="990" y="675"/><use href="#d5" x="963" y="684"/><use href="#dp" x="970" y="684"/><use href="#d7" x="974" y="684"/><use href="#d5" x="945" y="698"/><use href="#dp" x="952" y="698"/><use href="#d5" x="956" y="698"/><use href="#d5" x="990" y="704"/><use href="#dp" x="997" y="704"/><use href="#d5" x="1001" y="704"/><use href="#d7" x="938" y="711"/><use href="#dp" x="945" y="711"/><use href="#d5" x="949" y="711"/><use href="#d5" x="997" y="716"/><use href="#dp" x="1004" y="716"/><use href="#d6" x="1008" y="716"/><use href="#d6" x="921" y="722"/><use href="#dp" x="928" y="722"/><use href="#d0" x="932" y="722"/><use href="#d7" x="955" y="724"/><use href="#dp" x="962" y="724"/><use href="#d7" x="966" y="724"/><use href="#d6" x="1007" y="733"/><use href="#dp" x="1014" y="733"/><use href="#d2" x="1018" y="733"/><use href="#d8" x="961" y="736"/><use href="#dp" x="968" y="736"/><use href="#d5" x="972" y="736"/><use href="#d6" x="962" y="752"/><use href="#dp" x="969" y="752"/><use href="#d8" x="973" y="752"/><use href="#d5" x="1009" y="753"/><use href="#dp" x="1016" y="753"/><use href="#d7" x="1020" y="753"/></g><g fill="#ffffff"><use href="#dm" x="204" y="19"/><use href="#d1" x="208" y="19"/><use href="#dp" x="215" y="19"/><use href="#d2" x="219" y="19"/><use href="#dm" x="965" y="4"/><use href="#d5" x="969" y="4"/><use href="#dp" x="976" y="4"/><use href="#d6" x="980" y="4"/><use href="#dm" x="950" y="31"/><use href="#d4" x="954" y="31"/><use href="#dp" x="961" y="31"/><use href="#d7" x="965" y="31"/><use href="#dm" x="1001" y="31"/><use href="#d2" x="1005" y="31"/><use href="#dp" x="1012" y="31"/><use href="#d9" x="1016" y="31"/><use href="#dm" x="1009" y="6"/><use href="#d4" x="1013" y="6"/><use href="#dp" x="1020" y="6"/><use href="#dm" x="885" y="45"/><use href="#d2" x="889" y="45"/><use href="#dp" x="896" y="45"/><use href="#d2" x="900" y="45"/><use href="#dm" x="929" y="47"/><use href="#d5" x="933" y="47"/><use href="#dp" x="940" y="47"/><use href="#d9" x="944" y="47"/><use href="#dm" x="965" y="52"/><use href="#d3" x="969" y="52"/><use href="#dp" x="976" y="52"/><use href="#d4" x="980" y="52"/><use href="#dm" x="1005" y="55"/><use href="#d2" x="1009" y="55"/><use href="#dp" x="1016" y="55"/><use href="#d6" x="1020" y="55"/><use href="#dm" x="877" y="69"/><use href="#d0" x="881" y="69"/><use href="#dp" x="888" y="69"/><use href="#d1" x="892" y="69"/><use href="#dm" x="949" y="81"/><use href="#d3" x="953" y="81"/><use href="#dp" x="960" y="81"/><use href="#d0" x="964" y="81"/><use href="#dm" x="998" y="82"/><use href="#d1" x="1002" y="82"/><use href="#dp" x="1009" y="82"/><use href="#d7" x="1013" y="82"/><use href="#dm" x="857" y="86"/><use href="#d4" x="861" y="86"/><use href="#dp" x="868" y="86"/><use href="#d6" x="872" y="86"/><use href="#dm" x="923" y="102"/><use href="#d1" x="927" y="102"/><use href="#dp" x="934" y="102"/><use href="#d8" x="938" y="102"/><use href="#dm" x="962" y="101"/><use href="#d2" x="966" y="101"/><use href="#dp" x="973" y="101"/><use href="#d6" x="977" y="101"/><use href="#dm" x="995" y="107"/><use href="#d0" x="999" y="107"/><use href="#dp" x="1006" y="107"/><use href="#d5" x="1010" y="107"/><use href="#dm" x="836" y="111"/><use href="#d1" x="840" y="111"/><use href="#dp" x="847" y="111"/><use href="#d7" x="851" y="111"/><use href="#dm" x="901" y="115"/><use href="#d2" x="905" y="115"/><use href="#dp" x="912" y="115"/><use href="#d8" x="916" y="115"/><use href="#dm" x="952" y="115"/><use href="#d2" x="956" y="115"/><use href="#dp" x="963" y="115"/><use href="#d9" x="967" y="115"/><use href="#dm" x="821" y="127"/><use href="#d5" x="825" y="127"/><use href="#dp" x="832" y="127"/><use href="#d4" x="836" y="127"/><use href="#dm" x="937" y="126"/><use href="#d1" x="941" y="126"/><use href="#dp" x="948" y="126"/><use href="#d5" x="952" y="126"/><use href="#dm" x="786" y="134"/><use href="#d3" x="790" y="134"/><use href="#dp" x="797" y="134"/><use href="#d3" x="801" y="134"/><use href="#dm" x="902" y="139"/><use href="#d2" x="906" y="139"/><use href="#dp" x="913" y="139"/><use href="#d6" x="917" y="139"/><use href="#dm" x="850" y="145"/><use href="#d2" x="854" y="145"/><use href="#dp" x="861" y="145"/><use href="#d5" x="865" y="145"/><use href="#dm" x="921" y="157"/><use href="#d1" x="925" y="157"/><use href="#dp" x="932" y="157"/><use href="#d6" x="936" y="157"/><use href="#dm" x="981" y="156"/><use href="#d0" x="985" y="156"/><use href="#dp" x="992" y="156"/><use href="#d2" x="996" y="156"/><use href="#dm" x="802" y="166"/><use href="#d3" x="806" y="166"/><use href="#dp" x="813" y="166"/><use href="#d3" x="817" y="166"/><use href="#dm" x="938" y="172"/><use href="#d2" x="942" y="172"/><use href="#dp" x="949" y="172"/><use href="#d5" x="953" y="172"/><use href="#dm" x="971" y="177"/><use href="#d0" x="975" y="177"/><use href="#dp" x="982" y="177"/><use href="#d5" x="986" y="177"/><use href="#dm" x="898" y="177"/><use href="#d4" x="902" y="177"/><use href="#dp" x="909" y="177"/><use href="#d3" x="913" y="177"/><use href="#dm" x="837" y="181"/><use href="#d8" x="841" y="181"/><use href="#dp" x="848" y="181"/><use href="#d7" x="852" y="181"/><use href="#dm" x="755" y="162"/><use href="#d5" x="759" y="162"/><use href="#dp" x="766" y="162"/><use href="#d4" x="770" y="162"/><use href="#dm" x="760" y="247"/><use href="#d0" x="764" y="247"/><use href="#dp" x="771" y="247"/><use href="#d1" x="775" y="247"/><use href="#dm" x="910" y="191"/><use href="#d3" x="914" y="191"/><use href="#dp" x="921" y="191"/><use href="#d1" x="925" y="191"/><use href="#dm" x="955" y="191"/><use href="#d2" x="959" y="191"/><use href="#dp" x="966" y="191"/><use href="#d2" x="970" y="191"/><use href="#dm" x="782" y="211"/><use href="#d0" x="786" y="211"/><use href="#dp" x="793" y="211"/><use href="#d8" x="797" y="211"/><use href="#dm" x="851" y="208"/><use href="#d5" x="855" y="208"/><use href="#dp" x="862" y="208"/><use href="#d4" x="866" y="208"/><use href="#dm" x="890" y="204"/><use href="#d5" x="894" y="204"/><use href="#dp" x="901" y="204"/><use href="#d0" x="905" y="204"/><use href="#dm" x="924" y="220"/><use href="#d1" x="928" y="220"/><use href="#dp" x="935" y="220"/><use href="#d7" x="939" y="220"/><use href="#dm" x="828" y="228"/><use href="#d2" x="832" y="228"/><use href="#dp" x="839" y="228"/><use href="#d3" x="843" y="228"/><use href="#dm" x="990" y="227"/><use href="#d0" x="994" y="227"/><use href="#dp" x="1001" y="227"/><use href="#d6" x="1005" y="227"/><use href="#dm" x="924" y="232"/><use href="#d2" x="928" y="232"/><use href="#dp" x="935" y="232"/><use href="#d6" x="939" y="232"/><use href="#dm" x="877" y="244"/><use href="#d3" x="881" y="244"/><use href="#dp" x="888" y="244"/><use href="#d6" x="892" y="244"/><use href="#dm" x="961" y="242"/><use href="#d0" x="965" y="242"/><use href="#dp" x="972" y="242"/><use href="#d4" x="976" y="242"/><use href="#dm" x="1007" y="246"/><use href="#d0" x="1011" y="246"/><use href="#dp" x="1018" y="246"/><use href="#d3" x="1022" y="246"/><use href="#dm" x="794" y="256"/><use href="#d0" x="798" y="256"/><use href="#dp" x="805" y="256"/><use href="#d1" x="809" y="256"/><use href="#dm" x="865" y="254"/><use href="#d5" x="869" y="254"/><use href="#dp" x="876" y="254"/><use href="#d9" x="880" y="254"/><use href="#dm" x="902" y="254"/><use href="#d4" x="906" y="254"/><use href="#dp" x="913" y="254"/><use href="#d3" x="917" y="254"/><use href="#dm" x="885" y="268"/><use href="#d1" x="889" y="268"/><use href="#dp" x="896" y="268"/><use href="#d7" x="900" y="268"/><use href="#dm" x="919" y="271"/><use href="#d1" x="923" y="271"/><use href="#dp" x="930" y="271"/><use href="#d6" x="934" y="271"/><use href="#dm" x="837" y="301"/><use href="#d0" x="841" y="301"/><use href="#dp" x="848" y="301"/><use href="#d3" x="852" y="301"/><use href="#dm" x="878" y="340"/><use href="#d0" x="882" y="340"/><use href="#dp" x="889" y="340"/><use href="#d4" x="893" y="340"/><use href="#dm" x="901" y="361"/><use href="#d3" x="905" y="361"/><use href="#dp" x="912" y="361"/><use href="#d2" x="916" y="361"/></g><g fill="#00ff00"><use href="#d1" x="426" y="279"/><use href="#d1" x="433" y="279"/><use href="#dp" x="440" y="279"/><use href="#d0" x="444" y="279"/><use href="#d1" x="460" y="281"/><use href="#d1" x="467" y="281"/><use href="#dp" x="474" y="281"/><use href="#d7" x="478" y="281"/><use href="#d1" x="495" y="287"/><use href="#d1" x="502" y="287"/><use href="#dp" x="509" y="287"/><use href="#d3" x="513" y="287"/><use href="#d1" x="414" y="320"/><use href="#d0" x="421" y="320"/><use href="#dp" x="428" y="320"/><use href="#d2" x="432" y="320"/><use href="#d1" x="459" y="317"/><use href="#d1" x="466" y="317"/><use href="#dp" x="473" y="317"/><use href="#d9" x="477" y="317"/><use href="#d1" x="430" y="336"/><use href="#d2" x="437" y="336"/><use href="#dp" x="444" y="336"/><use href="#d0" x="448" y="336"/><use href="#d1" x="470" y="338"/><use href="#d2" x="477" y="338"/><use href="#dp" x="484" y="338"/><use href="#d6" x="488" y="338"/><use href="#d1" x="388" y="359"/><use href="#d1" x="395" y="359"/><use href="#dp" x="402" y="359"/><use href="#d3" x="406" y="359"/><use href="#d1" x="426" y="363"/><use href="#d1" x="433" y="363"/><use href="#dp" x="440" y="363"/><use href="#d5" x="444" y="363"/><use href="#d1" x="473" y="365"/><use href="#d0" x="480" y="365"/><use href="#dp" x="487" y="365"/><use href="#d2" x="491" y="365"/><use href="#d1" x="514" y="343"/><use href="#d0" x="521" y="343"/><use href="#dp" x="528" y="343"/><use href="#d7" x="532" y="343"/><use href="#d1" x="511" y="365"/><use href="#d1" x="518" y="365"/><use href="#dp" x="525" y="365"/><use href="#d3" x="529" y="365"/><use href="#d1" x="515" y="232"/><use href="#d0" x="522" y="232"/><use href="#dp" x="529" y="232"/><use href="#d8" x="533" y="232"/><use href="#d1" x="453" y="379"/><use href="#d1" x="460" y="379"/><use href="#dp" x="467" y="379"/><use href="#d1" x="471" y="379"/><use href="#d1" x="510" y="380"/><use href="#d0" x="517" y="380"/><use href="#dp" x="524" y="380"/><use href="#d1" x="528" y="380"/><use href="#d1" x="401" y="396"/><use href="#d2" x="408" y="396"/><use href="#dp" x="415" y="396"/><use href="#d3" x="419" y="396"/><use href="#d1" x="475" y="403"/><use href="#d1" x="482" y="403"/><use href="#dp" x="489" y="403"/><use href="#d4" x="493" y="403"/><use href="#d1" x="456" y="420"/><use href="#d1" x="463" y="420"/><use href="#dp" x="470" y="420"/><use href="#d7" x="474" y="420"/><use href="#d1" x="416" y="430"/><use href="#d2" x="423" y="430"/><use href="#dp" x="430" y="430"/><use href="#d5" x="434" y="430"/><use href="#d1" x="456" y="437"/><use href="#d2" x="463" y="437"/><use href="#dp" x="470" y="437"/><use href="#d5" x="474" y="437"/><use href="#d1" x="390" y="444"/><use href="#d2" x="397" y="444"/><use href="#dp" x="404" y="444"/><use href="#d5" x="408" y="444"/><use href="#d1" x="398" y="456"/><use href="#d1" x="405" y="456"/><use href="#dp" x="412" y="456"/><use href="#d8" x="416" y="456"/><use href="#d1" x="430" y="472"/><use href="#d2" x="437" y="472"/><use href="#dp" x="444" y="472"/><use href="#d2" x="448" y="472"/><use href="#d1" x="494" y="462"/><use href="#d1" x="501" y="462"/><use href="#dp" x="508" y="462"/><use href="#d2" x="512" y="462"/><use href="#d1" x="369" y="479"/><use href="#d2" x="376" y="479"/><use href="#dp" x="383" y="479"/><use href="#d5" x="387" y="479"/><use href="#d1" x="489" y="474"/><use href="#d1" x="496" y="474"/><use href="#dp" x="503" y="474"/><use href="#d2" x="507" y="474"/><use href="#d1" x="327" y="490"/><use href="#d3" x="334" y="490"/><use href="#dp" x="341" y="490"/><use href="#d2" x="345" y="490"/><use href="#d1" x="393" y="492"/><use href="#d0" x="400" y="492"/><use href="#dp" x="407" y="492"/><use href="#d9" x="411" y="492"/><use href="#d1" x="454" y="495"/><use href="#d2" x="461" y="495"/><use href="#dp" x="468" y="495"/><use href="#d3" x="472" y="495"/><use href="#d1" x="487" y="495"/><use href="#d1" x="494" y="495"/><use href="#dp" x="501" y="495"/><use href="#d8" x="505" y="495"/><use href="#d1" x="352" y="511"/><use href="#d2" x="359" y="511"/><use href="#dp" x="366" y="511"/><use href="#d1" x="370" y="511"/><use href="#d1" x="416" y="522"/><use href="#d1" x="423" y="522"/><use href="#dp" x="430" y="522"/><use href="#d0" x="434" y="522"/><use href="#d1" x="491" y="520"/><use href="#d2" x="498" y="520"/><use href="#dp" x="505" y="520"/><use href="#d3" x="509" y="520"/><use href="#d1" x="456" y="530"/><use href="#d2" x="463" y="530"/><use href="#dp" x="470" y="530"/><use href="#d7" x="474" y="530"/><use href="#d1" x="493" y="533"/><use href="#d2" x="500" y="533"/><use href="#dp" x="507" y="533"/><use href="#d1" x="511" y="533"/><use href="#d1" x="377" y="536"/><use href="#d1" x="384" y="536"/><use href="#dp" x="391" y="536"/><use href="#d3" x="395" y="536"/><use href="#d1" x="353" y="551"/><use href="#d2" x="360" y="551"/><use href="#dp" x="367" y="551"/><use href="#d5" x="371" y="551"/><use href="#d1" x="392" y="552"/><use href="#d1" x="399" y="552"/><use href="#dp" x="406" y="552"/><use href="#d2" x="410" y="552"/><use href="#d1" x="452" y="548"/><use href="#d2" x="459" y="548"/><use href="#dp" x="466" y="548"/><use href="#d2" x="470" y="548"/><use href="#d1" x="501" y="547"/><use href="#d0" x="508" y="547"/><use href="#dp" x="515" y="547"/><use href="#d9" x="519" y="547"/><use href="#d1" x="414" y="569"/><use href="#d0" x="421" y="569"/><use href="#dp" x="428" y="569"/><use href="#d7" x="432" y="569"/><use href="#d1" x="470" y="565"/><use href="#d2" x="477" y="565"/><use href="#dp" x="484" y="565"/><use href="#d0" x="488" y="565"/><use href="#d1" x="507" y="430"/><use href="#d0" x="514" y="430"/><use href="#dp" x="521" y="430"/><use href="#d5" x="525" y="430"/><use href="#d1" x="526" y="441"/><use href="#d0" x="533" y="441"/><use href="#dp" x="540" y="441"/><use href="#d6" x="544" y="441"/><use href="#d1" x="543" y="477"/><use href="#d0" x="550" y="477"/><use href="#dp" x="557" y="477"/><use href="#d3" x="561" y="477"/><use href="#d1" x="528" y="487"/><use href="#d1" x="535" y="487"/><use href="#dp" x="542" y="487"/><use href="#d4" x="546" y="487"/><use href="#d1" x="535" y="505"/><use href="#d1" x="542" y="505"/><use href="#dp" x="549" y="505"/><use href="#d7" x="553" y="505"/><use href="#d1" x="534" y="539"/><use href="#d0" x="541" y="539"/><use href="#dp" x="548" y="539"/><use href="#d3" x="552" y="539"/><use href="#d1" x="532" y="564"/><use href="#d0" x="539" y="564"/><use href="#dp" x="546" y="564"/><use href="#d5" x="550" y="564"/><use href="#d1" x="640" y="394"/><use href="#d0" x="647" y="394"/><use href="#dp" x="654" y="394"/><use href="#d6" x="658" y="394"/><use href="#d1" x="676" y="465"/><use href="#d1" x="683" y="465"/><use href="#dp" x="690" y="465"/><use href="#d5" x="694" y="465"/><use href="#d1" x="714" y="493"/><use href="#d1" x="721" y="493"/><use href="#dp" x="728" y="493"/><use href="#d6" x="732" y="493"/><use href="#d1" x="751" y="492"/><use href="#d0" x="758" y="492"/><use href="#dp" x="765" y="492"/><use href="#d7" x="769" y="492"/><use href="#d1" x="757" y="505"/><use href="#d1" x="764" y="505"/><use href="#dp" x="771" y="505"/><use href="#d2" x="775" y="505"/><use href="#d1" x="767" y="518"/><use href="#d0" x="774" y="518"/><use href="#dp" x="781" y="518"/><use href="#d5" x="785" y="518"/><use href="#d1" x="872" y="518"/><use href="#d3" x="879" y="518"/><use href="#dp" x="886" y="518"/><use href="#d0" x="890" y="518"/><use href="#d1" x="901" y="548"/><use href="#d4" x="908" y="548"/><use href="#dp" x="915" y="548"/><use href="#d2" x="919" y="548"/><use href="#d1" x="321" y="580"/><use href="#d3" x="328" y="580"/><use href="#dp" x="335" y="580"/><use href="#d3" x="339" y="580"/><use href="#d1" x="368" y="586"/><use href="#d1" x="375" y="586"/><use href="#dp" x="382" y="586"/><use href="#d8" x="386" y="586"/><use href="#d1" x="470" y="595"/><use href="#d1" x="477" y="595"/><use href="#dp" x="484" y="595"/><use href="#d4" x="488" y="595"/><use href="#d1" x="466" y="613"/><use href="#d2" x="473" y="613"/><use href="#dp" x="480" y="613"/><use href="#d9" x="484" y="613"/><use href="#d1" x="453" y="635"/><use href="#d0" x="460" y="635"/><use href="#dp" x="467" y="635"/><use href="#d9" x="471" y="635"/><use href="#d1" x="438" y="646"/><use href="#d2" x="445" y="646"/><use href="#dp" x="452" y="646"/><use href="#d5" x="456" y="646"/><use href="#d1" x="415" y="657"/><use href="#d3" x="422" y="657"/><use href="#dp" x="429" y="657"/><use href="#d1" x="433" y="657"/><use href="#d1" x="461" y="701"/><use href="#d2" x="468" y="701"/><use href="#dp" x="475" y="701"/><use href="#d6" x="479" y="701"/><use href="#d1" x="459" y="716"/><use href="#d2" x="466" y="716"/><use href="#dp" x="473" y="716"/><use href="#d3" x="477" y="716"/><use href="#d1" x="460" y="733"/><use href="#d3" x="467" y="733"/><use href="#dp" x="474" y="733"/><use href="#d2" x="478" y="733"/><use href="#d1" x="489" y="750"/><use href="#d2" x="496" y="750"/><use href="#dp" x="503" y="750"/><use href="#d7" x="507" y="750"/><use href="#d1" x="498" y="575"/><use href="#d1" x="505" y="575"/><use href="#dp" x="512" y="575"/><use href="#d2" x="516" y="575"/><use href="#d1" x="575" y="583"/><use href="#d0" x="582" y="583"/><use href="#dp" x="589" y="583"/><use href="#d1" x="593" y="583"/><use href="#d1" x="642" y="578"/><use href="#d2" x="649" y="578"/><use href="#dp" x="656" y="578"/><use href="#d7" x="660" y="578"/><use href="#d1" x="503" y="597"/><use href="#d1" x="510" y="597"/><use href="#dp" x="517" y="597"/><use href="#d0" x="521" y="597"/><use href="#d1" x="538" y="593"/><use href="#d1" x="545" y="593"/><use href="#dp" x="552" y="593"/><use href="#d1" x="556" y="593"/><use href="#d1" x="582" y="599"/><use href="#d2" x="589" y="599"/><use href="#dp" x="596" y="599"/><use href="#d4" x="600" y="599"/><use href="#d1" x="649" y="599"/><use href="#d2" x="656" y="599"/><use href="#dp" x="663" y="599"/><use href="#d3" x="667" y="599"/><use href="#d1" x="558" y="611"/><use href="#d1" x="565" y="611"/><use href="#dp" x="572" y="611"/><use href="#d1" x="576" y="611"/><use href="#d1" x="654" y="609"/><use href="#d1" x="661" y="609"/><use href="#dp" x="668" y="609"/><use href="#d7" x="672" y="609"/><use href="#d1" x="620" y="614"/><use href="#d2" x="627" y="614"/><use href="#dp" x="634" y="614"/><use href="#d6" x="638" y="614"/><use href="#d1" x="542" y="623"/><use href="#d1" x="549" y="623"/><use href="#dp" x="556" y="623"/><use href="#d3" x="560" y="623"/><use href="#d1" x="506" y="634"/><use href="#d1" x="513" y="634"/><use href="#dp" x="520" y="634"/><use href="#d9" x="524" y="634"/><use href="#d1" x="602" y="634"/><use href="#d3" x="609" y="634"/><use href="#dp" x="616" y="634"/><use href="#d1" x="620" y="634"/><use href="#d1" x="638" y="646"/><use href="#d0" x="645" y="646"/><use href="#dp" x="652" y="646"/><use href="#d4" x="656" y="646"/><use href="#d1" x="590" y="657"/><use href="#d3" x="597" y="657"/><use href="#dp" x="604" y="657"/><use href="#d4" x="608" y="657"/><use href="#d1" x="518" y="664"/><use href="#d3" x="525" y="664"/><use href="#dp" x="532" y="664"/><use href="#d4" x="536" y="664"/><use href="#d1" x="502" y="674"/><use href="#d1" x="509" y="674"/><use href="#dp" x="516" y="674"/><use href="#d8" x="520" y="674"/><use href="#d1" x="566" y="671"/><use href="#d2" x="573" y="671"/><use href="#dp" x="580" y="671"/><use href="#d5" x="584" y="671"/><use href="#d1" x="614" y="673"/><use href="#d0" x="621" y="673"/><use href="#dp" x="628" y="673"/><use href="#d3" x="632" y="673"/><use href="#d1" x="553" y="683"/><use href="#d0" x="560" y="683"/><use href="#dp" x="567" y="683"/><use href="#d4" x="571" y="683"/><use href="#d1" x="619" y="697"/><use href="#d0" x="626" y="697"/><use href="#dp" x="633" y="697"/><use href="#d2" x="637" y="697"/><use href="#d1" x="496" y="707"/><use href="#d0" x="503" y="707"/><use href="#dp" x="510" y="707"/><use href="#d5" x="514" y="707"/><use href="#d1" x="569" y="728"/><use href="#d0" x="576" y="728"/><use href="#dp" x="583" y="728"/><use href="#d1" x="587" y="728"/><use href="#d1" x="640" y="531"/><use href="#d2" x="647" y="531"/><use href="#dp" x="654" y="531"/><use href="#d9" x="658" y="531"/><use href="#d1" x="680" y="531"/><use href="#d1" x="687" y="531"/><use href="#dp" x="694" y="531"/><use href="#d8" x="698" y="531"/><use href="#d1" x="677" y="543"/><use href="#d0" x="684" y="543"/><use href="#dp" x="691" y="543"/><use href="#d7" x="695" y="543"/><use href="#d1" x="673" y="559"/><use href="#d1" x="680" y="559"/><use href="#dp" x="687" y="559"/><use href="#d9" x="691" y="559"/><use href="#d1" x="818" y="594"/><use href="#d0" x="825" y="594"/><use href="#dp" x="832" y="594"/><use href="#d7" x="836" y="594"/><use href="#d1" x="667" y="624"/><use href="#d0" x="674" y="624"/><use href="#dp" x="681" y="624"/><use href="#d5" x="685" y="624"/><use href="#d1" x="732" y="634"/><use href="#d0" x="739" y="634"/><use href="#dp" x="746" y="634"/><use href="#d5" x="750" y="634"/><use href="#d1" x="814" y="646"/><use href="#d0" x="821" y="646"/><use href="#dp" x="828" y="646"/><use href="#d5" x="832" y="646"/><use href="#d1" x="855" y="614"/><use href="#d2" x="862" y="614"/><use href="#dp" x="869" y="614"/><use href="#d3" x="873" y="614"/><use href="#d1" x="918" y="614"/><use href="#d4" x="925" y="614"/><use href="#dp" x="932" y="614"/><use href="#d9" x="936" y="614"/><use href="#d1" x="836" y="626"/><use href="#d1" x="843" y="626"/><use href="#dp" x="850" y="626"/><use href="#d5" x="854" y="626"/><use href="#d1" x="870" y="631"/><use href="#d2" x="877" y="631"/><use href="#dp" x="884" y="631"/><use href="#d9" x="888" y="631"/><use href="#d1" x="849" y="646"/><use href="#d2" x="856" y="646"/><use href="#dp" x="863" y="646"/><use href="#d0" x="867" y="646"/><use href="#d1" x="861" y="657"/><use href="#d2" x="868" y="657"/><use href="#dp" x="875" y="657"/><use href="#d5" x="879" y="657"/><use href="#d1" x="659" y="678"/><use href="#d0" x="666" y="678"/><use href="#dp" x="673" y="678"/><use href="#d0" x="677" y="678"/><use href="#d1" x="808" y="693"/><use href="#d0" x="815" y="693"/><use href="#dp" x="822" y="693"/><use href="#d3" x="826" y="693"/><use href="#d1" x="808" y="728"/><use href="#d0" x="815" y="728"/><use href="#dp" x="822" y="728"/><use href="#d3" x="826" y="728"/><use href="#d1" x="804" y="744"/><use href="#d0" x="811" y="744"/><use href="#dp" x="818" y="744"/><use href="#d1" x="822" y="744"/><use href="#d1" x="824" y="660"/><use href="#d1" x="831" y="660"/><use href="#dp" x="838" y="660"/><use href="#d0" x="842" y="660"/><use href="#d1" x="820" y="671"/><use href="#d0" x="827" y="671"/><use href="#dp" x="834" y="671"/><use href="#d7" x="838" y="671"/><use href="#d1" x="862" y="674"/><use href="#d2" x="869" y="674"/><use href="#dp" x="876" y="674"/><use href="#d6" x="880" y="674"/><use href="#d1" x="828" y="682"/><use href="#d1" x="835" y="682"/><use href="#dp" x="842" y="682"/><use href="#d1" x="846" y="682"/><use href="#d1" x="845" y="692"/><use href="#d1" x="852" y="692"/><use href="#dp" x="859" y="692"/><use href="#d8" x="863" y="692"/><use href="#d1" x="880" y="689"/><use href="#d3" x="887" y="689"/><use href="#dp" x="894" y="689"/><use href="#d3" x="898" y="689"/><use href="#d1" x="889" y="701"/><use href="#d3" x="896" y="701"/><use href="#dp" x="903" y="701"/><use href="#d7" x="907" y="701"/><use href="#d1" x="850" y="703"/><use href="#d2" x="857" y="703"/><use href="#dp" x="864" y="703"/><use href="#d0" x="868" y="703"/><use href="#d1" x="817" y="705"/><use href="#d0" x="824" y="705"/><use href="#dp" x="831" y="705"/><use href="#d7" x="835" y="705"/><use href="#d1" x="879" y="712"/><use href="#d3" x="886" y="712"/><use href="#dp" x="893" y="712"/><use href="#d3" x="897" y="712"/><use href="#d1" x="844" y="718"/><use href="#d1" x="851" y="718"/><use href="#dp" x="858" y="718"/><use href="#d8" x="862" y="718"/><use href="#d1" x="870" y="727"/><use href="#d2" x="877" y="727"/><use href="#dp" x="884" y="727"/><use href="#d9" x="888" y="727"/><use href="#d1" x="872" y="738"/><use href="#d3" x="879" y="738"/><use href="#dp" x="886" y="738"/><use href="#d0" x="890" y="738"/><use href="#d1" x="837" y="740"/><use href="#d1" x="844" y="740"/><use href="#dp" x="851" y="740"/><use href="#d5" x="855" y="740"/></g></svg>
</div></body></html>
